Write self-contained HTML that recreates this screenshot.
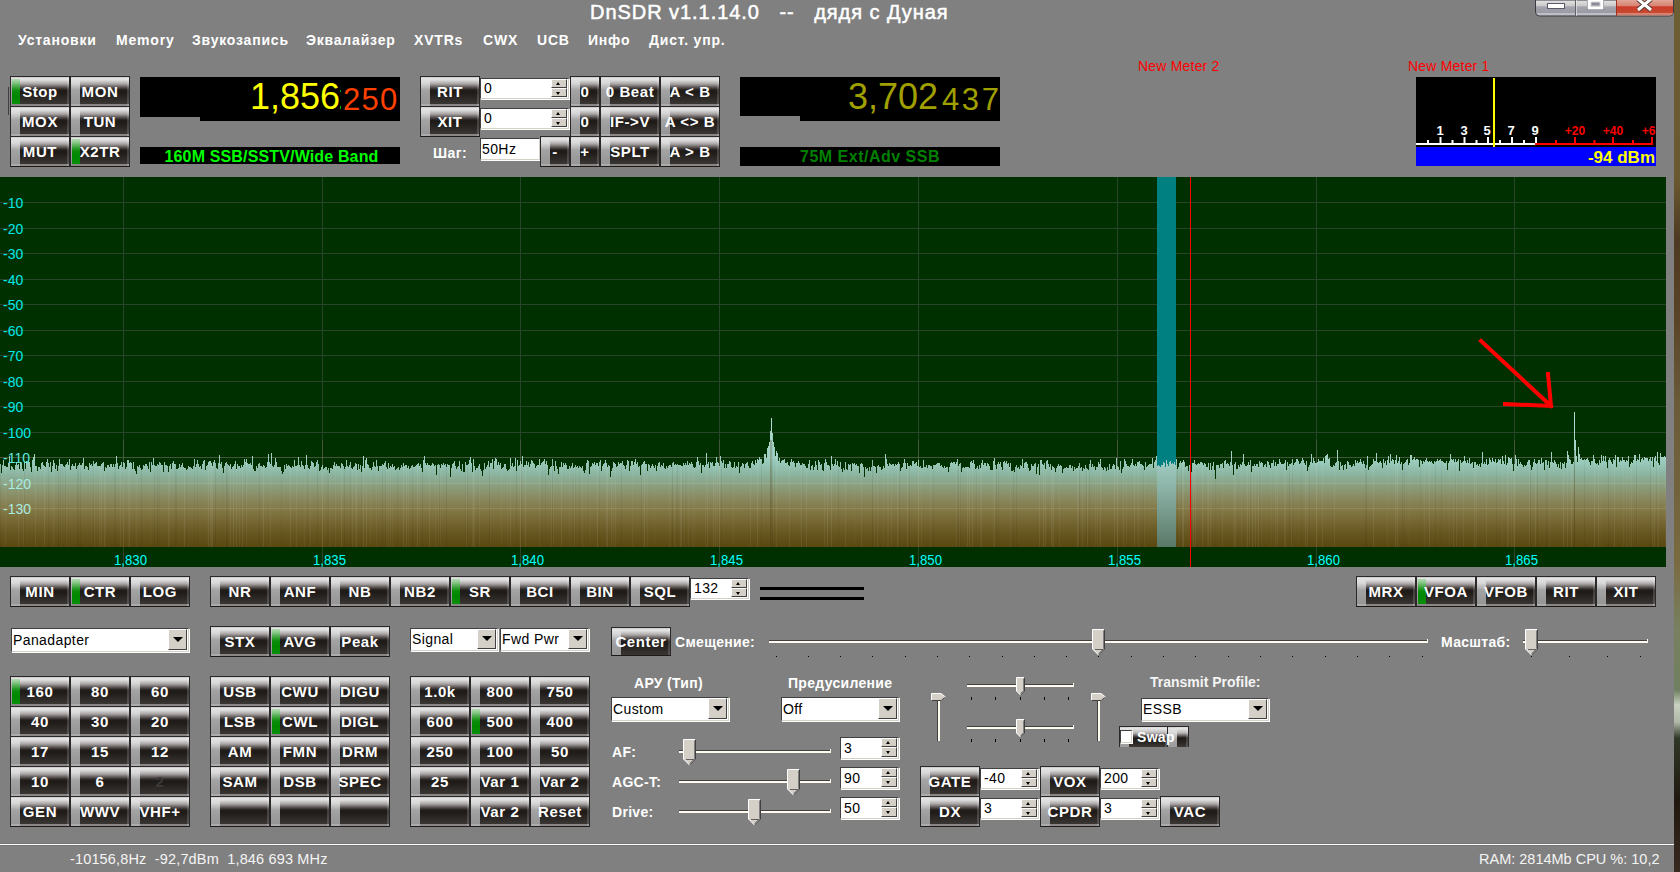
<!DOCTYPE html><html><head><meta charset="utf-8"><style>
html,body{margin:0;padding:0;width:1680px;height:872px;overflow:hidden;background:#808080;font-family:"Liberation Sans",sans-serif;}
.a{position:absolute;white-space:nowrap}
.b{position:absolute;box-sizing:border-box;width:60px;height:30px;border:1px solid #2a2828;border-top:0;border-bottom-color:#1e1a18;
background:linear-gradient(to bottom,#b4b4b4 0,#e6e6e6 1px,#dedede 3px,#c4c0c0 5px,#a8a4a4 7px,#787272 9px,#4a4442 11px,#221e1c 13px,#1e1a18 15px,#3a3634 27px,#8a8686 27px,#8a8686 29px);
box-shadow:inset -2px 0 0 rgba(255,255,255,.16),0 -1px 0 #2a2828;
color:#fff;font-weight:bold;font-size:15px;text-align:center;line-height:29px;letter-spacing:.6px}
.b::before{content:"";position:absolute;left:0;top:0;bottom:0;width:9px;
background:linear-gradient(to bottom,#c0c0c0 0,#e4e4e4 1px,#d8d8d8 6px,#bcbcbc 10px,#a4a4a4 13px,#9c9c9c 20px,#969696 27px,#acacac 27px,#acacac 29px)}
.b.on::before{left:1px;width:8px;top:2px;bottom:2px;background:linear-gradient(to bottom,#b0dcb0 0,#90cc90 3px,#60b460 6px,#30a030 9px,#0a8c0a 12px,#008800 18px,#0c900c 25px)}
.b.on::after{content:"";position:absolute;left:0;top:0;bottom:0;width:1px;background:linear-gradient(#e0e0e0,#a8a8a8 40%,#909090)}
.b.dis{color:#3c3a3a}
.b span{position:relative}
.sk{position:absolute;box-sizing:border-box;background:#fff;border:1px solid;border-color:#404040 #d4d0c8 #d4d0c8 #404040;box-shadow:1px 1px 0 #fff;font-size:14px;color:#000;padding-left:1px;letter-spacing:.4px}
.arr{position:absolute;box-sizing:border-box;background:#d4d0c8;border:1px solid;border-color:#fff #404040 #404040 #fff}
.arr::after{content:"";position:absolute;left:50%;top:50%;margin-left:-5px;margin-top:-3px;border-left:5px solid transparent;border-right:5px solid transparent;border-top:5px solid #000}
.sp{position:absolute;box-sizing:border-box;background:#d4d0c8;border:1px solid;border-color:#fff #404040 #404040 #fff}
.sp.u::after{content:"";position:absolute;left:50%;top:50%;margin-left:-3px;margin-top:-2px;border-left:2.5px solid transparent;border-right:2.5px solid transparent;border-bottom:3px solid #000}
.sp.d::after{content:"";position:absolute;left:50%;top:50%;margin-left:-3px;margin-top:-1px;border-left:2.5px solid transparent;border-right:2.5px solid transparent;border-top:3px solid #000}
.lbl{position:absolute;white-space:nowrap;color:#fff;font-weight:bold;font-size:14px}
</style></head><body>
<div class="a" style="left:1674px;top:0;width:6px;height:872px;background:linear-gradient(to bottom,#6e5e34 0,#6a5830 180px,#4e3a22 240px,#5a4428 320px,#6a5a38 400px,#7a6a40 560px,#788060 630px,#708060 690px,#c8d0c0 705px,#b0b8a8 722px,#303828 738px,#201810 800px,#3a2a20 872px)"></div>
<div class="a" style="left:590px;top:1px;font-size:20px;line-height:23px;color:#fff;font-weight:normal;letter-spacing:.95px;-webkit-text-stroke:.5px #fff">DnSDR v1.1.14.0&nbsp;&nbsp;&nbsp;--&nbsp;&nbsp;&nbsp;дядя с Дуная</div>
<svg class="a" style="left:1535px;top:0" width="139" height="18" viewBox="0 0 139 18"><defs><linearGradient id="wg" x1="0" y1="0" x2="0" y2="16" gradientUnits="userSpaceOnUse"><stop offset="0" stop-color="#e4e4e4"/><stop offset="0.38" stop-color="#c8c8c8"/><stop offset="0.42" stop-color="#a4a4ac"/><stop offset="0.8" stop-color="#9a9aa6"/><stop offset="0.85" stop-color="#c4c4ca"/><stop offset="1" stop-color="#b0b0b8"/></linearGradient><linearGradient id="wr" x1="0" y1="0" x2="0" y2="16" gradientUnits="userSpaceOnUse"><stop offset="0" stop-color="#e0a898"/><stop offset="0.38" stop-color="#d88070"/><stop offset="0.42" stop-color="#cc3a28"/><stop offset="0.78" stop-color="#c84830"/><stop offset="0.85" stop-color="#d88a78"/><stop offset="1" stop-color="#c87060"/></linearGradient></defs><path d="M0.5 0V12Q0.5 16 4.5 16H134.5Q138.5 16 138.5 12V0Z" fill="url(#wg)" stroke="#3c3c44"/><path d="M82 0H138V12Q138 15.5 134.5 15.5H82Z" fill="url(#wr)"/><rect x="41" y="0" width="1" height="16" fill="#f0f0f0" fill-opacity=".6"/><rect x="40" y="0" width="1" height="16" fill="#606068"/><rect x="81" y="0" width="1" height="16" fill="#a03020"/><rect x="12.5" y="3.5" width="17" height="5" fill="#fff" stroke="#5a5a6a"/><rect x="52.5" y="-1.5" width="16" height="11" fill="none" stroke="#5a5a6a"/><rect x="54" y="0" width="13" height="8" fill="none" stroke="#fff" stroke-width="3"/><rect x="56.5" y="2.5" width="8" height="3" fill="#8a8a98"/><path d="M103 -1L116 10M116 -1L103 10" stroke="#5a3a3a" stroke-width="5"/><path d="M103 -1L116 10M116 -1L103 10" stroke="#fff" stroke-width="3"/></svg>
<div class="a" style="left:18px;top:32px;font-size:14px;line-height:16px;color:#fff;font-weight:bold;letter-spacing:.8px">Установки</div>
<div class="a" style="left:116px;top:32px;font-size:14px;line-height:16px;color:#fff;font-weight:bold;letter-spacing:.8px">Memory</div>
<div class="a" style="left:192px;top:32px;font-size:14px;line-height:16px;color:#fff;font-weight:bold;letter-spacing:.8px">Звукозапись</div>
<div class="a" style="left:306px;top:32px;font-size:14px;line-height:16px;color:#fff;font-weight:bold;letter-spacing:.8px">Эквалайзер</div>
<div class="a" style="left:414px;top:32px;font-size:14px;line-height:16px;color:#fff;font-weight:bold;letter-spacing:.8px">XVTRs</div>
<div class="a" style="left:483px;top:32px;font-size:14px;line-height:16px;color:#fff;font-weight:bold;letter-spacing:.8px">CWX</div>
<div class="a" style="left:537px;top:32px;font-size:14px;line-height:16px;color:#fff;font-weight:bold;letter-spacing:.8px">UCB</div>
<div class="a" style="left:588px;top:32px;font-size:14px;line-height:16px;color:#fff;font-weight:bold;letter-spacing:.8px">Инфо</div>
<div class="a" style="left:649px;top:32px;font-size:14px;line-height:16px;color:#fff;font-weight:bold;letter-spacing:.8px">Дист. упр.</div>
<div class="b on" style="left:10px;top:77px"><span>Stop</span></div>
<div class="b" style="left:70px;top:77px"><span>MON</span></div>
<div class="b" style="left:10px;top:107px"><span>MOX</span></div>
<div class="b" style="left:70px;top:107px"><span>TUN</span></div>
<div class="b" style="left:10px;top:137px"><span>MUT</span></div>
<div class="b on" style="left:70px;top:137px"><span>X2TR</span></div>
<div class="a" style="left:8px;top:87px;width:1px;height:28px;background:#404040"></div>
<div class="a" style="left:140px;top:77px;width:260px;height:40px;background:#000"></div>
<div class="a" style="left:200px;top:117px;width:200px;height:4px;background:#000"></div>
<div class="a" style="left:250px;top:76px;font-size:36px;line-height:41px;color:#ffff00;font-weight:normal;">1,856</div>
<div class="a" style="left:343px;top:82px;font-size:31px;line-height:36px;color:#ff4000;font-weight:normal;letter-spacing:1.2px">250</div>
<div class="a" style="left:340px;top:90px;width:1px;height:2px;background:#00b000"></div><div class="a" style="left:340px;top:106px;width:1px;height:3px;background:#00b000"></div>
<div class="a" style="left:941px;top:98px;width:2px;height:3px;background:#808000"></div>
<div class="a" style="left:140px;top:147px;width:260px;height:17px;background:#000"></div>
<div class="a" style="left:140px;top:147px;width:260px;height:17px;line-height:19px;text-align:center;color:#00ff00;font-weight:bold;font-size:16px;letter-spacing:.15px;padding-left:3px;box-sizing:border-box">160M SSB/SSTV/Wide Band</div>
<div class="b" style="left:420px;top:77px"><span>RIT</span></div>
<div class="b" style="left:420px;top:107px"><span>XIT</span></div>
<div class="sk" style="left:480px;top:78px;width:89px;height:21px;line-height:19px;font-size:14px;padding-left:3px">0</div>
<div class="sp u" style="left:551px;top:79px;width:16px;height:9px"></div>
<div class="sp d" style="left:551px;top:88px;width:16px;height:9px"></div>
<div class="sk" style="left:480px;top:108px;width:89px;height:21px;line-height:19px;font-size:14px;padding-left:3px">0</div>
<div class="sp u" style="left:551px;top:109px;width:16px;height:9px"></div>
<div class="sp d" style="left:551px;top:118px;width:16px;height:9px"></div>
<div class="a" style="left:433px;top:145px;font-size:14px;line-height:16px;color:#fff;font-weight:bold;letter-spacing:.4px">Шаг:</div>
<div class="sk" style="left:480px;top:138px;width:60px;height:22px;line-height:20px">50Hz</div>
<div class="b" style="left:570px;top:77px;width:30px"><span>0</span></div>
<div class="b" style="left:600px;top:77px"><span>0 Beat</span></div>
<div class="b" style="left:660px;top:77px"><span>A &lt; B</span></div>
<div class="b" style="left:570px;top:107px;width:30px"><span>0</span></div>
<div class="b" style="left:600px;top:107px"><span>IF-&gt;V</span></div>
<div class="b" style="left:660px;top:107px"><span>A &lt;&gt; B</span></div>
<div class="b" style="left:540px;top:137px;width:30px"><span>-</span></div>
<div class="b" style="left:570px;top:137px;width:30px"><span>+</span></div>
<div class="b" style="left:600px;top:137px"><span>SPLT</span></div>
<div class="b" style="left:660px;top:137px"><span>A &gt; B</span></div>
<div class="a" style="left:740px;top:77px;width:260px;height:39px;background:#000"></div>
<div class="a" style="left:800px;top:116px;width:200px;height:5px;background:#000"></div>
<div class="a" style="left:848px;top:76px;font-size:36px;line-height:41px;color:#a0a000;font-weight:normal;">3,702</div>
<div class="a" style="left:942px;top:82px;font-size:31px;line-height:36px;color:#a0a000;font-weight:normal;letter-spacing:2.6px">437</div>
<div class="a" style="left:740px;top:147px;width:260px;height:19px;background:#000"></div>
<div class="a" style="left:740px;top:147px;width:260px;height:19px;line-height:19px;text-align:center;color:#008000;font-weight:bold;font-size:16px;letter-spacing:.5px">75M Ext/Adv SSB</div>
<div class="a" style="left:1138px;top:58px;font-size:14px;line-height:16px;color:#ff0000;font-weight:normal;letter-spacing:.2px">New Meter 2</div>
<div class="a" style="left:1408px;top:58px;font-size:14px;line-height:16px;color:#ff0000;font-weight:normal;letter-spacing:.2px">New Meter 1</div>
<svg class="a" style="left:1416px;top:77px" width="240" height="89" viewBox="0 0 240 89"><rect x="0" y="0" width="240" height="89" fill="#000"/><rect x="0" y="70" width="240" height="19" fill="#0000ff"/><rect x="0" y="66" width="119" height="2" fill="#fff"/><rect x="119" y="66" width="118" height="2" fill="#ff0000"/><rect x="11" y="63" width="2" height="3" fill="#fff"/><rect x="23.5" y="60" width="2" height="6" fill="#fff"/><rect x="35.5" y="63" width="2" height="3" fill="#fff"/><rect x="47.5" y="60" width="2" height="6" fill="#fff"/><rect x="59.5" y="63" width="2" height="3" fill="#fff"/><rect x="71" y="60" width="2" height="6" fill="#fff"/><rect x="83" y="63" width="2" height="3" fill="#fff"/><rect x="95" y="60" width="2" height="6" fill="#fff"/><rect x="107" y="63" width="2" height="3" fill="#fff"/><rect x="119" y="60" width="2" height="6" fill="#fff"/><rect x="139" y="63" width="2" height="3" fill="#ff0000"/><rect x="158" y="60" width="2" height="6" fill="#ff0000"/><rect x="177.5" y="63" width="2" height="3" fill="#ff0000"/><rect x="196" y="60" width="2" height="6" fill="#ff0000"/><rect x="216" y="63" width="2" height="3" fill="#ff0000"/><rect x="235" y="60" width="2" height="6" fill="#ff0000"/><text x="24" y="58" fill="#fff" font-family="Liberation Sans" font-weight="bold" font-size="13" text-anchor="middle">1</text><text x="48" y="58" fill="#fff" font-family="Liberation Sans" font-weight="bold" font-size="13" text-anchor="middle">3</text><text x="71" y="58" fill="#fff" font-family="Liberation Sans" font-weight="bold" font-size="13" text-anchor="middle">5</text><text x="95" y="58" fill="#fff" font-family="Liberation Sans" font-weight="bold" font-size="13" text-anchor="middle">7</text><text x="119" y="58" fill="#fff" font-family="Liberation Sans" font-weight="bold" font-size="13" text-anchor="middle">9</text><text x="159" y="58" fill="#ff0000" font-family="Liberation Sans" font-weight="bold" font-size="12" text-anchor="middle">+20</text><text x="197" y="58" fill="#ff0000" font-family="Liberation Sans" font-weight="bold" font-size="12" text-anchor="middle">+40</text><text x="236" y="58" fill="#ff0000" font-family="Liberation Sans" font-weight="bold" font-size="12" text-anchor="middle">+60</text><rect x="77" y="1" width="2" height="69" fill="#ffff00"/><text x="239" y="86" fill="#ffff00" font-family="Liberation Sans" font-weight="bold" font-size="17" text-anchor="end">-94 dBm</text></svg>
<svg class="a" style="left:0;top:177px" width="1666" height="390" viewBox="0 177 1666 390" shape-rendering="crispEdges"><defs><linearGradient id="g" x1="0" y1="410" x2="0" y2="547" gradientUnits="userSpaceOnUse"><stop offset="0" stop-color="#b0dcd4"/><stop offset="0.328" stop-color="#a2d2c6"/><stop offset="0.40" stop-color="#96c6b6"/><stop offset="0.47" stop-color="#8cb4a0"/><stop offset="0.55" stop-color="#8aa080"/><stop offset="0.63" stop-color="#8a8c64"/><stop offset="0.71" stop-color="#847c4c"/><stop offset="0.80" stop-color="#786a36"/><stop offset="0.90" stop-color="#665620"/><stop offset="1" stop-color="#5a4810"/></linearGradient><linearGradient id="pb" x1="0" y1="440" x2="0" y2="547" gradientUnits="userSpaceOnUse"><stop offset="0" stop-color="#b0e0d8"/><stop offset="0.4" stop-color="#90b8ac"/><stop offset="1" stop-color="#5a7868"/></linearGradient></defs><rect x="0" y="177" width="1666" height="390" fill="#003000"/><rect x="0" y="202" width="1666" height="1" fill="#294428"/><rect x="0" y="228" width="1666" height="1" fill="#294428"/><rect x="0" y="253" width="1666" height="1" fill="#294428"/><rect x="0" y="279" width="1666" height="1" fill="#294428"/><rect x="0" y="304" width="1666" height="1" fill="#294428"/><rect x="0" y="330" width="1666" height="1" fill="#294428"/><rect x="0" y="355" width="1666" height="1" fill="#294428"/><rect x="0" y="381" width="1666" height="1" fill="#294428"/><rect x="0" y="406" width="1666" height="1" fill="#294428"/><rect x="0" y="432" width="1666" height="1" fill="#294428"/><rect x="0" y="457" width="1666" height="1" fill="#294428"/><rect x="0" y="483" width="1666" height="1" fill="#294428"/><rect x="0" y="508" width="1666" height="1" fill="#294428"/><rect x="123" y="177" width="1" height="390" fill="#294428"/><rect x="322" y="177" width="1" height="390" fill="#294428"/><rect x="520" y="177" width="1" height="390" fill="#294428"/><rect x="719" y="177" width="1" height="390" fill="#294428"/><rect x="918" y="177" width="1" height="390" fill="#294428"/><rect x="1117" y="177" width="1" height="390" fill="#294428"/><rect x="1316" y="177" width="1" height="390" fill="#294428"/><rect x="1514" y="177" width="1" height="390" fill="#294428"/><path d="M0 547L0 464L1 464L1 473L2 473L2 465L3 465L3 460L4 460L4 466L5 466L5 466L6 466L6 467L7 467L7 467L8 467L8 463L9 463L9 456L10 456L10 470L11 470L11 466L12 466L12 467L13 467L13 469L14 469L14 470L15 470L15 465L16 465L16 463L17 463L17 465L18 465L18 464L19 464L19 469L20 469L20 463L21 463L21 463L22 463L22 469L23 469L23 471L24 471L24 462L25 462L25 469L26 469L26 461L27 461L27 462L28 462L28 461L29 461L29 462L30 462L30 467L31 467L31 472L32 472L32 460L33 460L33 457L34 457L34 454L35 454L35 466L36 466L36 466L37 466L37 471L38 471L38 467L39 467L39 467L40 467L40 469L41 469L41 463L42 463L42 462L43 462L43 465L44 465L44 466L45 466L45 467L46 467L46 462L47 462L47 459L48 459L48 463L49 463L49 467L50 467L50 462L51 462L51 472L52 472L52 466L53 466L53 460L54 460L54 463L55 463L55 469L56 469L56 465L57 465L57 471L58 471L58 466L59 466L59 459L60 459L60 464L61 464L61 464L62 464L62 464L63 464L63 466L64 466L64 467L65 467L65 465L66 465L66 464L67 464L67 462L68 462L68 465L69 465L69 459L70 459L70 470L71 470L71 466L72 466L72 464L73 464L73 466L74 466L74 466L75 466L75 463L76 463L76 469L77 469L77 466L78 466L78 465L79 465L79 463L80 463L80 465L81 465L81 465L82 465L82 463L83 463L83 458L84 458L84 469L85 469L85 466L86 466L86 466L87 466L87 467L88 467L88 470L89 470L89 463L90 463L90 465L91 465L91 464L92 464L92 466L93 466L93 461L94 461L94 464L95 464L95 463L96 463L96 462L97 462L97 466L98 466L98 466L99 466L99 466L100 466L100 466L101 466L101 464L102 464L102 463L103 463L103 462L104 462L104 471L105 471L105 467L106 467L106 468L107 468L107 465L108 465L108 465L109 465L109 467L110 467L110 464L111 464L111 464L112 464L112 467L113 467L113 464L114 464L114 467L115 467L115 464L116 464L116 456L117 456L117 463L118 463L118 469L119 469L119 466L120 466L120 465L121 465L121 462L122 462L122 467L123 467L123 462L124 462L124 463L125 463L125 469L126 469L126 467L127 467L127 460L128 460L128 460L129 460L129 463L130 463L130 462L131 462L131 463L132 463L132 469L133 469L133 462L134 462L134 469L135 469L135 471L136 471L136 474L137 474L137 466L138 466L138 467L139 467L139 465L140 465L140 468L141 468L141 470L142 470L142 469L143 469L143 465L144 465L144 466L145 466L145 464L146 464L146 464L147 464L147 466L148 466L148 469L149 469L149 462L150 462L150 472L151 472L151 462L152 462L152 465L153 465L153 458L154 458L154 465L155 465L155 466L156 466L156 466L157 466L157 464L158 464L158 465L159 465L159 462L160 462L160 463L161 463L161 465L162 465L162 465L163 465L163 472L164 472L164 462L165 462L165 465L166 465L166 465L167 465L167 466L168 466L168 472L169 472L169 466L170 466L170 464L171 464L171 469L172 469L172 463L173 463L173 461L174 461L174 464L175 464L175 464L176 464L176 469L177 469L177 469L178 469L178 468L179 468L179 464L180 464L180 467L181 467L181 465L182 465L182 463L183 463L183 467L184 467L184 468L185 468L185 468L186 468L186 470L187 470L187 469L188 469L188 466L189 466L189 467L190 467L190 467L191 467L191 468L192 468L192 469L193 469L193 466L194 466L194 459L195 459L195 467L196 467L196 464L197 464L197 460L198 460L198 464L199 464L199 467L200 467L200 466L201 466L201 469L202 469L202 464L203 464L203 461L204 461L204 460L205 460L205 470L206 470L206 466L207 466L207 465L208 465L208 462L209 462L209 461L210 461L210 461L211 461L211 463L212 463L212 466L213 466L213 462L214 462L214 460L215 460L215 463L216 463L216 468L217 468L217 469L218 469L218 463L219 463L219 455L220 455L220 464L221 464L221 462L222 462L222 468L223 468L223 473L224 473L224 466L225 466L225 463L226 463L226 462L227 462L227 464L228 464L228 465L229 465L229 466L230 466L230 464L231 464L231 469L232 469L232 467L233 467L233 466L234 466L234 464L235 464L235 461L236 461L236 469L237 469L237 464L238 464L238 466L239 466L239 466L240 466L240 468L241 468L241 465L242 465L242 467L243 467L243 465L244 465L244 459L245 459L245 462L246 462L246 459L247 459L247 463L248 463L248 464L249 464L249 464L250 464L250 463L251 463L251 465L252 465L252 456L253 456L253 469L254 469L254 471L255 471L255 471L256 471L256 466L257 466L257 468L258 468L258 464L259 464L259 463L260 463L260 466L261 466L261 466L262 466L262 467L263 467L263 465L264 465L264 466L265 466L265 468L266 468L266 467L267 467L267 462L268 462L268 454L269 454L269 462L270 462L270 464L271 464L271 453L272 453L272 466L273 466L273 467L274 467L274 465L275 465L275 458L276 458L276 462L277 462L277 467L278 467L278 467L279 467L279 467L280 467L280 467L281 467L281 471L282 471L282 474L283 474L283 472L284 472L284 465L285 465L285 469L286 469L286 464L287 464L287 466L288 466L288 465L289 465L289 466L290 466L290 467L291 467L291 468L292 468L292 466L293 466L293 467L294 467L294 460L295 460L295 466L296 466L296 466L297 466L297 465L298 465L298 457L299 457L299 465L300 465L300 467L301 467L301 461L302 461L302 465L303 465L303 466L304 466L304 469L305 469L305 465L306 465L306 455L307 455L307 465L308 465L308 468L309 468L309 469L310 469L310 466L311 466L311 461L312 461L312 462L313 462L313 463L314 463L314 467L315 467L315 466L316 466L316 462L317 462L317 460L318 460L318 464L319 464L319 471L320 471L320 470L321 470L321 467L322 467L322 465L323 465L323 469L324 469L324 468L325 468L325 467L326 467L326 467L327 467L327 470L328 470L328 468L329 468L329 473L330 473L330 468L331 468L331 468L332 468L332 469L333 469L333 465L334 465L334 462L335 462L335 466L336 466L336 464L337 464L337 466L338 466L338 466L339 466L339 466L340 466L340 468L341 468L341 463L342 463L342 464L343 464L343 466L344 466L344 469L345 469L345 467L346 467L346 460L347 460L347 466L348 466L348 467L349 467L349 465L350 465L350 462L351 462L351 468L352 468L352 469L353 469L353 467L354 467L354 466L355 466L355 463L356 463L356 464L357 464L357 470L358 470L358 464L359 464L359 469L360 469L360 465L361 465L361 472L362 472L362 466L363 466L363 456L364 456L364 468L365 468L365 460L366 460L366 458L367 458L367 464L368 464L368 465L369 465L369 468L370 468L370 468L371 468L371 470L372 470L372 467L373 467L373 462L374 462L374 466L375 466L375 467L376 467L376 460L377 460L377 466L378 466L378 471L379 471L379 466L380 466L380 466L381 466L381 466L382 466L382 464L383 464L383 465L384 465L384 463L385 463L385 461L386 461L386 467L387 467L387 469L388 469L388 463L389 463L389 468L390 468L390 466L391 466L391 467L392 467L392 464L393 464L393 467L394 467L394 466L395 466L395 470L396 470L396 469L397 469L397 468L398 468L398 467L399 467L399 470L400 470L400 468L401 468L401 465L402 465L402 467L403 467L403 463L404 463L404 466L405 466L405 465L406 465L406 465L407 465L407 468L408 468L408 466L409 466L409 469L410 469L410 468L411 468L411 466L412 466L412 465L413 465L413 467L414 467L414 467L415 467L415 466L416 466L416 465L417 465L417 464L418 464L418 463L419 463L419 466L420 466L420 464L421 464L421 468L422 468L422 472L423 472L423 460L424 460L424 456L425 456L425 463L426 463L426 465L427 465L427 463L428 463L428 465L429 465L429 465L430 465L430 466L431 466L431 465L432 465L432 463L433 463L433 464L434 464L434 466L435 466L435 465L436 465L436 475L437 475L437 465L438 465L438 464L439 464L439 465L440 465L440 468L441 468L441 464L442 464L442 465L443 465L443 463L444 463L444 465L445 465L445 464L446 464L446 467L447 467L447 464L448 464L448 465L449 465L449 465L450 465L450 477L451 477L451 468L452 468L452 464L453 464L453 463L454 463L454 461L455 461L455 466L456 466L456 469L457 469L457 467L458 467L458 466L459 466L459 461L460 461L460 469L461 469L461 471L462 471L462 464L463 464L463 472L464 472L464 472L465 472L465 462L466 462L466 465L467 465L467 465L468 465L468 464L469 464L469 460L470 460L470 457L471 457L471 463L472 463L472 472L473 472L473 459L474 459L474 466L475 466L475 470L476 470L476 468L477 468L477 468L478 468L478 466L479 466L479 464L480 464L480 469L481 469L481 471L482 471L482 476L483 476L483 470L484 470L484 463L485 463L485 469L486 469L486 467L487 467L487 465L488 465L488 461L489 461L489 467L490 467L490 463L491 463L491 463L492 463L492 459L493 459L493 469L494 469L494 461L495 461L495 458L496 458L496 459L497 459L497 465L498 465L498 462L499 462L499 465L500 465L500 463L501 463L501 469L502 469L502 468L503 468L503 467L504 467L504 464L505 464L505 464L506 464L506 469L507 469L507 471L508 471L508 470L509 470L509 469L510 469L510 458L511 458L511 466L512 466L512 463L513 463L513 467L514 467L514 466L515 466L515 458L516 458L516 471L517 471L517 460L518 460L518 466L519 466L519 465L520 465L520 461L521 461L521 464L522 464L522 456L523 456L523 467L524 467L524 465L525 465L525 465L526 465L526 461L527 461L527 465L528 465L528 462L529 462L529 467L530 467L530 464L531 464L531 460L532 460L532 461L533 461L533 463L534 463L534 464L535 464L535 468L536 468L536 466L537 466L537 465L538 465L538 465L539 465L539 459L540 459L540 465L541 465L541 463L542 463L542 462L543 462L543 461L544 461L544 459L545 459L545 464L546 464L546 461L547 461L547 465L548 465L548 475L549 475L549 469L550 469L550 467L551 467L551 466L552 466L552 459L553 459L553 466L554 466L554 471L555 471L555 461L556 461L556 466L557 466L557 469L558 469L558 474L559 474L559 467L560 467L560 467L561 467L561 462L562 462L562 467L563 467L563 463L564 463L564 465L565 465L565 463L566 463L566 465L567 465L567 469L568 469L568 469L569 469L569 466L570 466L570 468L571 468L571 466L572 466L572 463L573 463L573 468L574 468L574 467L575 467L575 465L576 465L576 467L577 467L577 466L578 466L578 468L579 468L579 466L580 466L580 467L581 467L581 468L582 468L582 466L583 466L583 471L584 471L584 473L585 473L585 470L586 470L586 463L587 463L587 460L588 460L588 461L589 461L589 474L590 474L590 467L591 467L591 466L592 466L592 463L593 463L593 464L594 464L594 462L595 462L595 465L596 465L596 463L597 463L597 463L598 463L598 466L599 466L599 462L600 462L600 460L601 460L601 471L602 471L602 466L603 466L603 464L604 464L604 463L605 463L605 460L606 460L606 463L607 463L607 467L608 467L608 465L609 465L609 466L610 466L610 477L611 477L611 471L612 471L612 468L613 468L613 462L614 462L614 463L615 463L615 464L616 464L616 467L617 467L617 466L618 466L618 462L619 462L619 464L620 464L620 463L621 463L621 463L622 463L622 461L623 461L623 465L624 465L624 466L625 466L625 469L626 469L626 465L627 465L627 460L628 460L628 461L629 461L629 471L630 471L630 466L631 466L631 461L632 461L632 461L633 461L633 465L634 465L634 462L635 462L635 459L636 459L636 464L637 464L637 462L638 462L638 467L639 467L639 466L640 466L640 475L641 475L641 465L642 465L642 464L643 464L643 462L644 462L644 461L645 461L645 464L646 464L646 464L647 464L647 471L648 471L648 464L649 464L649 465L650 465L650 468L651 468L651 466L652 466L652 464L653 464L653 466L654 466L654 468L655 468L655 465L656 465L656 471L657 471L657 466L658 466L658 463L659 463L659 462L660 462L660 467L661 467L661 465L662 465L662 466L663 466L663 463L664 463L664 468L665 468L665 469L666 469L666 466L667 466L667 468L668 468L668 466L669 466L669 465L670 465L670 465L671 465L671 467L672 467L672 463L673 463L673 462L674 462L674 465L675 465L675 464L676 464L676 465L677 465L677 464L678 464L678 465L679 465L679 465L680 465L680 465L681 465L681 466L682 466L682 466L683 466L683 463L684 463L684 465L685 465L685 463L686 463L686 465L687 465L687 461L688 461L688 465L689 465L689 463L690 463L690 464L691 464L691 462L692 462L692 464L693 464L693 467L694 467L694 468L695 468L695 467L696 467L696 462L697 462L697 457L698 457L698 461L699 461L699 465L700 465L700 463L701 463L701 473L702 473L702 465L703 465L703 465L704 465L704 467L705 467L705 465L706 465L706 453L707 453L707 464L708 464L708 462L709 462L709 468L710 468L710 462L711 462L711 463L712 463L712 462L713 462L713 466L714 466L714 466L715 466L715 463L716 463L716 457L717 457L717 462L718 462L718 463L719 463L719 466L720 466L720 456L721 456L721 461L722 461L722 463L723 463L723 460L724 460L724 468L725 468L725 464L726 464L726 468L727 468L727 464L728 464L728 464L729 464L729 461L730 461L730 462L731 462L731 467L732 467L732 468L733 468L733 467L734 467L734 462L735 462L735 468L736 468L736 466L737 466L737 467L738 467L738 462L739 462L739 473L740 473L740 467L741 467L741 466L742 466L742 463L743 463L743 464L744 464L744 468L745 468L745 464L746 464L746 463L747 463L747 462L748 462L748 466L749 466L749 468L750 468L750 468L751 468L751 463L752 463L752 461L753 461L753 464L754 464L754 465L755 465L755 460L756 460L756 463L757 463L757 459L758 459L758 460L759 460L759 457L760 457L760 459L761 459L761 459L762 459L762 464L763 464L763 463L764 463L764 454L765 454L765 454L766 454L766 458L767 458L767 448L768 448L768 446L769 446L769 442L770 442L770 431L771 431L771 418L772 418L772 433L773 433L773 442L774 442L774 447L775 447L775 456L776 456L776 451L777 451L777 453L778 453L778 461L779 461L779 458L780 458L780 463L781 463L781 461L782 461L782 460L783 460L783 460L784 460L784 459L785 459L785 463L786 463L786 463L787 463L787 462L788 462L788 465L789 465L789 466L790 466L790 462L791 462L791 459L792 459L792 462L793 462L793 461L794 461L794 463L795 463L795 467L796 467L796 463L797 463L797 463L798 463L798 461L799 461L799 463L800 463L800 465L801 465L801 465L802 465L802 463L803 463L803 464L804 464L804 464L805 464L805 466L806 466L806 468L807 468L807 468L808 468L808 464L809 464L809 460L810 460L810 470L811 470L811 466L812 466L812 465L813 465L813 470L814 470L814 467L815 467L815 461L816 461L816 465L817 465L817 470L818 470L818 460L819 460L819 462L820 462L820 465L821 465L821 464L822 464L822 470L823 470L823 471L824 471L824 463L825 463L825 459L826 459L826 462L827 462L827 465L828 465L828 465L829 465L829 466L830 466L830 470L831 470L831 456L832 456L832 464L833 464L833 466L834 466L834 464L835 464L835 459L836 459L836 465L837 465L837 461L838 461L838 466L839 466L839 467L840 467L840 462L841 462L841 469L842 469L842 472L843 472L843 468L844 468L844 470L845 470L845 462L846 462L846 469L847 469L847 470L848 470L848 464L849 464L849 465L850 465L850 464L851 464L851 471L852 471L852 463L853 463L853 464L854 464L854 463L855 463L855 465L856 465L856 464L857 464L857 466L858 466L858 466L859 466L859 473L860 473L860 464L861 464L861 463L862 463L862 464L863 464L863 467L864 467L864 477L865 477L865 467L866 467L866 469L867 469L867 468L868 468L868 471L869 471L869 467L870 467L870 471L871 471L871 467L872 467L872 460L873 460L873 466L874 466L874 466L875 466L875 467L876 467L876 473L877 473L877 466L878 466L878 465L879 465L879 467L880 467L880 467L881 467L881 470L882 470L882 469L883 469L883 466L884 466L884 468L885 468L885 454L886 454L886 459L887 459L887 464L888 464L888 466L889 466L889 463L890 463L890 464L891 464L891 465L892 465L892 464L893 464L893 464L894 464L894 466L895 466L895 464L896 464L896 465L897 465L897 464L898 464L898 462L899 462L899 464L900 464L900 471L901 471L901 468L902 468L902 467L903 467L903 463L904 463L904 459L905 459L905 463L906 463L906 469L907 469L907 463L908 463L908 466L909 466L909 466L910 466L910 465L911 465L911 466L912 466L912 461L913 461L913 461L914 461L914 464L915 464L915 463L916 463L916 462L917 462L917 466L918 466L918 460L919 460L919 467L920 467L920 466L921 466L921 468L922 468L922 468L923 468L923 460L924 460L924 467L925 467L925 467L926 467L926 465L927 465L927 468L928 468L928 465L929 465L929 465L930 465L930 466L931 466L931 466L932 466L932 469L933 469L933 465L934 465L934 465L935 465L935 465L936 465L936 464L937 464L937 463L938 463L938 463L939 463L939 463L940 463L940 466L941 466L941 465L942 465L942 467L943 467L943 468L944 468L944 466L945 466L945 468L946 468L946 467L947 467L947 467L948 467L948 472L949 472L949 467L950 467L950 463L951 463L951 462L952 462L952 463L953 463L953 462L954 462L954 462L955 462L955 464L956 464L956 462L957 462L957 459L958 459L958 466L959 466L959 464L960 464L960 463L961 463L961 472L962 472L962 468L963 468L963 467L964 467L964 468L965 468L965 467L966 467L966 467L967 467L967 467L968 467L968 467L969 467L969 468L970 468L970 462L971 462L971 461L972 461L972 463L973 463L973 460L974 460L974 464L975 464L975 469L976 469L976 468L977 468L977 466L978 466L978 469L979 469L979 465L980 465L980 468L981 468L981 463L982 463L982 460L983 460L983 465L984 465L984 463L985 463L985 463L986 463L986 466L987 466L987 463L988 463L988 464L989 464L989 466L990 466L990 470L991 470L991 470L992 470L992 470L993 470L993 461L994 461L994 458L995 458L995 465L996 465L996 469L997 469L997 464L998 464L998 462L999 462L999 464L1000 464L1000 462L1001 462L1001 467L1002 467L1002 470L1003 470L1003 462L1004 462L1004 461L1005 461L1005 463L1006 463L1006 461L1007 461L1007 464L1008 464L1008 463L1009 463L1009 467L1010 467L1010 463L1011 463L1011 471L1012 471L1012 471L1013 471L1013 470L1014 470L1014 472L1015 472L1015 467L1016 467L1016 465L1017 465L1017 468L1018 468L1018 467L1019 467L1019 469L1020 469L1020 465L1021 465L1021 466L1022 466L1022 459L1023 459L1023 468L1024 468L1024 463L1025 463L1025 462L1026 462L1026 462L1027 462L1027 464L1028 464L1028 468L1029 468L1029 471L1030 471L1030 470L1031 470L1031 464L1032 464L1032 466L1033 466L1033 466L1034 466L1034 464L1035 464L1035 463L1036 463L1036 474L1037 474L1037 467L1038 467L1038 464L1039 464L1039 475L1040 475L1040 460L1041 460L1041 460L1042 460L1042 464L1043 464L1043 465L1044 465L1044 463L1045 463L1045 469L1046 469L1046 461L1047 461L1047 460L1048 460L1048 464L1049 464L1049 467L1050 467L1050 464L1051 464L1051 470L1052 470L1052 466L1053 466L1053 467L1054 467L1054 468L1055 468L1055 472L1056 472L1056 468L1057 468L1057 466L1058 466L1058 464L1059 464L1059 466L1060 466L1060 465L1061 465L1061 466L1062 466L1062 473L1063 473L1063 469L1064 469L1064 468L1065 468L1065 468L1066 468L1066 467L1067 467L1067 468L1068 468L1068 468L1069 468L1069 465L1070 465L1070 465L1071 465L1071 468L1072 468L1072 466L1073 466L1073 471L1074 471L1074 467L1075 467L1075 469L1076 469L1076 468L1077 468L1077 468L1078 468L1078 466L1079 466L1079 463L1080 463L1080 468L1081 468L1081 467L1082 467L1082 471L1083 471L1083 468L1084 468L1084 469L1085 469L1085 465L1086 465L1086 468L1087 468L1087 469L1088 469L1088 470L1089 470L1089 464L1090 464L1090 460L1091 460L1091 467L1092 467L1092 464L1093 464L1093 467L1094 467L1094 466L1095 466L1095 470L1096 470L1096 467L1097 467L1097 467L1098 467L1098 462L1099 462L1099 464L1100 464L1100 459L1101 459L1101 467L1102 467L1102 468L1103 468L1103 470L1104 470L1104 467L1105 467L1105 468L1106 468L1106 471L1107 471L1107 467L1108 467L1108 470L1109 470L1109 464L1110 464L1110 469L1111 469L1111 469L1112 469L1112 466L1113 466L1113 464L1114 464L1114 465L1115 465L1115 469L1116 469L1116 458L1117 458L1117 466L1118 466L1118 467L1119 467L1119 470L1120 470L1120 461L1121 461L1121 473L1122 473L1122 469L1123 469L1123 467L1124 467L1124 459L1125 459L1125 461L1126 461L1126 464L1127 464L1127 466L1128 466L1128 466L1129 466L1129 467L1130 467L1130 465L1131 465L1131 463L1132 463L1132 459L1133 459L1133 465L1134 465L1134 466L1135 466L1135 464L1136 464L1136 466L1137 466L1137 462L1138 462L1138 462L1139 462L1139 461L1140 461L1140 464L1141 464L1141 464L1142 464L1142 465L1143 465L1143 466L1144 466L1144 470L1145 470L1145 462L1146 462L1146 467L1147 467L1147 466L1148 466L1148 465L1149 465L1149 464L1150 464L1150 464L1151 464L1151 464L1152 464L1152 458L1153 458L1153 468L1154 468L1154 462L1155 462L1155 460L1156 460L1156 456L1157 456L1157 466L1158 466L1158 465L1159 465L1159 466L1160 466L1160 467L1161 467L1161 465L1162 465L1162 465L1163 465L1163 462L1164 462L1164 463L1165 463L1165 467L1166 467L1166 460L1167 460L1167 464L1168 464L1168 466L1169 466L1169 462L1170 462L1170 461L1171 461L1171 464L1172 464L1172 463L1173 463L1173 464L1174 464L1174 462L1175 462L1175 465L1176 465L1176 459L1177 459L1177 469L1178 469L1178 467L1179 467L1179 463L1180 463L1180 461L1181 461L1181 463L1182 463L1182 462L1183 462L1183 460L1184 460L1184 462L1185 462L1185 467L1186 467L1186 466L1187 466L1187 466L1188 466L1188 471L1189 471L1189 465L1190 465L1190 468L1191 468L1191 472L1192 472L1192 463L1193 463L1193 463L1194 463L1194 460L1195 460L1195 464L1196 464L1196 465L1197 465L1197 464L1198 464L1198 463L1199 463L1199 464L1200 464L1200 462L1201 462L1201 462L1202 462L1202 463L1203 463L1203 465L1204 465L1204 463L1205 463L1205 464L1206 464L1206 467L1207 467L1207 467L1208 467L1208 463L1209 463L1209 470L1210 470L1210 463L1211 463L1211 470L1212 470L1212 466L1213 466L1213 462L1214 462L1214 470L1215 470L1215 479L1216 479L1216 465L1217 465L1217 465L1218 465L1218 465L1219 465L1219 468L1220 468L1220 464L1221 464L1221 464L1222 464L1222 463L1223 463L1223 468L1224 468L1224 461L1225 461L1225 460L1226 460L1226 464L1227 464L1227 463L1228 463L1228 464L1229 464L1229 466L1230 466L1230 462L1231 462L1231 451L1232 451L1232 465L1233 465L1233 475L1234 475L1234 464L1235 464L1235 462L1236 462L1236 469L1237 469L1237 469L1238 469L1238 465L1239 465L1239 467L1240 467L1240 464L1241 464L1241 465L1242 465L1242 462L1243 462L1243 454L1244 454L1244 464L1245 464L1245 466L1246 466L1246 466L1247 466L1247 465L1248 465L1248 462L1249 462L1249 465L1250 465L1250 460L1251 460L1251 472L1252 472L1252 466L1253 466L1253 466L1254 466L1254 464L1255 464L1255 466L1256 466L1256 464L1257 464L1257 464L1258 464L1258 467L1259 467L1259 461L1260 461L1260 463L1261 463L1261 462L1262 462L1262 463L1263 463L1263 467L1264 467L1264 465L1265 465L1265 464L1266 464L1266 467L1267 467L1267 461L1268 461L1268 462L1269 462L1269 465L1270 465L1270 468L1271 468L1271 463L1272 463L1272 463L1273 463L1273 460L1274 460L1274 466L1275 466L1275 462L1276 462L1276 466L1277 466L1277 464L1278 464L1278 464L1279 464L1279 459L1280 459L1280 462L1281 462L1281 464L1282 464L1282 464L1283 464L1283 464L1284 464L1284 463L1285 463L1285 460L1286 460L1286 470L1287 470L1287 462L1288 462L1288 466L1289 466L1289 464L1290 464L1290 464L1291 464L1291 463L1292 463L1292 459L1293 459L1293 465L1294 465L1294 463L1295 463L1295 462L1296 462L1296 459L1297 459L1297 459L1298 459L1298 461L1299 461L1299 464L1300 464L1300 463L1301 463L1301 461L1302 461L1302 458L1303 458L1303 460L1304 460L1304 463L1305 463L1305 465L1306 465L1306 461L1307 461L1307 471L1308 471L1308 467L1309 467L1309 465L1310 465L1310 462L1311 462L1311 454L1312 454L1312 463L1313 463L1313 458L1314 458L1314 461L1315 461L1315 463L1316 463L1316 463L1317 463L1317 462L1318 462L1318 459L1319 459L1319 461L1320 461L1320 461L1321 461L1321 461L1322 461L1322 461L1323 461L1323 458L1324 458L1324 463L1325 463L1325 456L1326 456L1326 455L1327 455L1327 454L1328 454L1328 459L1329 459L1329 458L1330 458L1330 466L1331 466L1331 467L1332 467L1332 467L1333 467L1333 465L1334 465L1334 466L1335 466L1335 463L1336 463L1336 462L1337 462L1337 450L1338 450L1338 461L1339 461L1339 470L1340 470L1340 462L1341 462L1341 466L1342 466L1342 465L1343 465L1343 470L1344 470L1344 465L1345 465L1345 464L1346 464L1346 469L1347 469L1347 461L1348 461L1348 462L1349 462L1349 465L1350 465L1350 465L1351 465L1351 467L1352 467L1352 466L1353 466L1353 464L1354 464L1354 466L1355 466L1355 460L1356 460L1356 463L1357 463L1357 461L1358 461L1358 463L1359 463L1359 462L1360 462L1360 459L1361 459L1361 462L1362 462L1362 464L1363 464L1363 461L1364 461L1364 464L1365 464L1365 468L1366 468L1366 465L1367 465L1367 456L1368 456L1368 470L1369 470L1369 467L1370 467L1370 466L1371 466L1371 465L1372 465L1372 464L1373 464L1373 459L1374 459L1374 461L1375 461L1375 461L1376 461L1376 453L1377 453L1377 462L1378 462L1378 463L1379 463L1379 462L1380 462L1380 461L1381 461L1381 463L1382 463L1382 468L1383 468L1383 459L1384 459L1384 463L1385 463L1385 461L1386 461L1386 465L1387 465L1387 460L1388 460L1388 456L1389 456L1389 463L1390 463L1390 454L1391 454L1391 461L1392 461L1392 459L1393 459L1393 460L1394 460L1394 464L1395 464L1395 460L1396 460L1396 455L1397 455L1397 463L1398 463L1398 461L1399 461L1399 457L1400 457L1400 464L1401 464L1401 462L1402 462L1402 470L1403 470L1403 464L1404 464L1404 463L1405 463L1405 462L1406 462L1406 460L1407 460L1407 459L1408 459L1408 465L1409 465L1409 463L1410 463L1410 455L1411 455L1411 455L1412 455L1412 460L1413 460L1413 459L1414 459L1414 457L1415 457L1415 460L1416 460L1416 459L1417 459L1417 459L1418 459L1418 460L1419 460L1419 467L1420 467L1420 460L1421 460L1421 461L1422 461L1422 464L1423 464L1423 461L1424 461L1424 462L1425 462L1425 460L1426 460L1426 458L1427 458L1427 461L1428 461L1428 462L1429 462L1429 461L1430 461L1430 462L1431 462L1431 461L1432 461L1432 463L1433 463L1433 464L1434 464L1434 461L1435 461L1435 462L1436 462L1436 461L1437 461L1437 459L1438 459L1438 461L1439 461L1439 460L1440 460L1440 459L1441 459L1441 461L1442 461L1442 461L1443 461L1443 462L1444 462L1444 463L1445 463L1445 463L1446 463L1446 461L1447 461L1447 470L1448 470L1448 463L1449 463L1449 461L1450 461L1450 454L1451 454L1451 459L1452 459L1452 460L1453 460L1453 459L1454 459L1454 462L1455 462L1455 459L1456 459L1456 462L1457 462L1457 461L1458 461L1458 459L1459 459L1459 471L1460 471L1460 460L1461 460L1461 463L1462 463L1462 462L1463 462L1463 461L1464 461L1464 456L1465 456L1465 461L1466 461L1466 463L1467 463L1467 460L1468 460L1468 463L1469 463L1469 458L1470 458L1470 464L1471 464L1471 463L1472 463L1472 462L1473 462L1473 468L1474 468L1474 462L1475 462L1475 462L1476 462L1476 465L1477 465L1477 464L1478 464L1478 466L1479 466L1479 464L1480 464L1480 467L1481 467L1481 463L1482 463L1482 452L1483 452L1483 464L1484 464L1484 462L1485 462L1485 464L1486 464L1486 459L1487 459L1487 465L1488 465L1488 464L1489 464L1489 458L1490 458L1490 460L1491 460L1491 462L1492 462L1492 458L1493 458L1493 461L1494 461L1494 462L1495 462L1495 459L1496 459L1496 463L1497 463L1497 462L1498 462L1498 459L1499 459L1499 460L1500 460L1500 459L1501 459L1501 464L1502 464L1502 456L1503 456L1503 461L1504 461L1504 464L1505 464L1505 455L1506 455L1506 465L1507 465L1507 463L1508 463L1508 457L1509 457L1509 458L1510 458L1510 459L1511 459L1511 458L1512 458L1512 464L1513 464L1513 471L1514 471L1514 464L1515 464L1515 455L1516 455L1516 459L1517 459L1517 466L1518 466L1518 459L1519 459L1519 464L1520 464L1520 462L1521 462L1521 464L1522 464L1522 465L1523 465L1523 467L1524 467L1524 465L1525 465L1525 466L1526 466L1526 465L1527 465L1527 462L1528 462L1528 460L1529 460L1529 460L1530 460L1530 465L1531 465L1531 470L1532 470L1532 467L1533 467L1533 462L1534 462L1534 459L1535 459L1535 463L1536 463L1536 464L1537 464L1537 463L1538 463L1538 460L1539 460L1539 460L1540 460L1540 464L1541 464L1541 458L1542 458L1542 463L1543 463L1543 462L1544 462L1544 470L1545 470L1545 460L1546 460L1546 460L1547 460L1547 465L1548 465L1548 461L1549 461L1549 468L1550 468L1550 462L1551 462L1551 452L1552 452L1552 462L1553 462L1553 463L1554 463L1554 460L1555 460L1555 462L1556 462L1556 464L1557 464L1557 467L1558 467L1558 464L1559 464L1559 468L1560 468L1560 462L1561 462L1561 469L1562 469L1562 463L1563 463L1563 464L1564 464L1564 462L1565 462L1565 468L1566 468L1566 463L1567 463L1567 451L1568 451L1568 455L1569 455L1569 459L1570 459L1570 460L1571 460L1571 464L1572 464L1572 464L1573 464L1573 462L1574 462L1574 412L1575 412L1575 440L1576 440L1576 456L1577 456L1577 462L1578 462L1578 447L1579 447L1579 454L1580 454L1580 459L1581 459L1581 458L1582 458L1582 460L1583 460L1583 460L1584 460L1584 459L1585 459L1585 460L1586 460L1586 459L1587 459L1587 458L1588 458L1588 460L1589 460L1589 462L1590 462L1590 465L1591 465L1591 461L1592 461L1592 461L1593 461L1593 455L1594 455L1594 459L1595 459L1595 463L1596 463L1596 464L1597 464L1597 463L1598 463L1598 465L1599 465L1599 460L1600 460L1600 463L1601 463L1601 455L1602 455L1602 461L1603 461L1603 456L1604 456L1604 461L1605 461L1605 456L1606 456L1606 462L1607 462L1607 468L1608 468L1608 460L1609 460L1609 458L1610 458L1610 460L1611 460L1611 462L1612 462L1612 464L1613 464L1613 459L1614 459L1614 460L1615 460L1615 455L1616 455L1616 467L1617 467L1617 457L1618 457L1618 457L1619 457L1619 462L1620 462L1620 460L1621 460L1621 461L1622 461L1622 457L1623 457L1623 460L1624 460L1624 460L1625 460L1625 462L1626 462L1626 460L1627 460L1627 461L1628 461L1628 456L1629 456L1629 467L1630 467L1630 464L1631 464L1631 462L1632 462L1632 463L1633 463L1633 460L1634 460L1634 455L1635 455L1635 455L1636 455L1636 461L1637 461L1637 459L1638 459L1638 460L1639 460L1639 454L1640 454L1640 462L1641 462L1641 459L1642 459L1642 458L1643 458L1643 460L1644 460L1644 457L1645 457L1645 458L1646 458L1646 458L1647 458L1647 458L1648 458L1648 461L1649 461L1649 459L1650 459L1650 457L1651 457L1651 461L1652 461L1652 457L1653 457L1653 467L1654 467L1654 458L1655 458L1655 456L1656 456L1656 461L1657 461L1657 452L1658 452L1658 463L1659 463L1659 465L1660 465L1660 453L1661 453L1661 457L1662 457L1662 457L1663 457L1663 457L1664 457L1664 456L1665 456L1665 457L1666 457L1666 547Z" fill="url(#g)"/><rect x="0" y="464" width="1" height="83" fill="#000" fill-opacity="0.05"/><rect x="5" y="466" width="1" height="81" fill="#fff" fill-opacity="0.05"/><rect x="18" y="464" width="1" height="83" fill="#fff" fill-opacity="0.07"/><rect x="23" y="471" width="1" height="76" fill="#fff" fill-opacity="0.05"/><rect x="24" y="462" width="1" height="85" fill="#000" fill-opacity="0.05"/><rect x="35" y="466" width="1" height="81" fill="#fff" fill-opacity="0.06"/><rect x="44" y="466" width="1" height="81" fill="#fff" fill-opacity="0.07"/><rect x="48" y="463" width="1" height="84" fill="#000" fill-opacity="0.05"/><rect x="53" y="460" width="1" height="87" fill="#fff" fill-opacity="0.06"/><rect x="58" y="466" width="1" height="81" fill="#000" fill-opacity="0.06"/><rect x="60" y="464" width="1" height="83" fill="#000" fill-opacity="0.06"/><rect x="61" y="464" width="1" height="83" fill="#fff" fill-opacity="0.04"/><rect x="62" y="464" width="1" height="83" fill="#000" fill-opacity="0.05"/><rect x="65" y="465" width="1" height="82" fill="#000" fill-opacity="0.06"/><rect x="66" y="464" width="1" height="83" fill="#fff" fill-opacity="0.04"/><rect x="77" y="466" width="1" height="81" fill="#000" fill-opacity="0.06"/><rect x="78" y="465" width="1" height="82" fill="#000" fill-opacity="0.05"/><rect x="80" y="465" width="1" height="82" fill="#000" fill-opacity="0.06"/><rect x="93" y="461" width="1" height="86" fill="#000" fill-opacity="0.05"/><rect x="94" y="464" width="1" height="83" fill="#fff" fill-opacity="0.05"/><rect x="99" y="466" width="1" height="81" fill="#fff" fill-opacity="0.05"/><rect x="101" y="464" width="1" height="83" fill="#fff" fill-opacity="0.07"/><rect x="104" y="471" width="1" height="76" fill="#fff" fill-opacity="0.07"/><rect x="105" y="467" width="1" height="80" fill="#fff" fill-opacity="0.04"/><rect x="114" y="467" width="1" height="80" fill="#000" fill-opacity="0.04"/><rect x="115" y="464" width="1" height="83" fill="#000" fill-opacity="0.06"/><rect x="120" y="465" width="1" height="82" fill="#fff" fill-opacity="0.06"/><rect x="123" y="462" width="1" height="85" fill="#000" fill-opacity="0.04"/><rect x="128" y="460" width="1" height="87" fill="#fff" fill-opacity="0.04"/><rect x="129" y="463" width="1" height="84" fill="#fff" fill-opacity="0.07"/><rect x="136" y="474" width="1" height="73" fill="#fff" fill-opacity="0.04"/><rect x="141" y="470" width="1" height="77" fill="#000" fill-opacity="0.07"/><rect x="150" y="472" width="1" height="75" fill="#fff" fill-opacity="0.03"/><rect x="154" y="465" width="1" height="82" fill="#000" fill-opacity="0.06"/><rect x="157" y="464" width="1" height="83" fill="#000" fill-opacity="0.07"/><rect x="159" y="462" width="1" height="85" fill="#000" fill-opacity="0.04"/><rect x="168" y="472" width="1" height="75" fill="#fff" fill-opacity="0.06"/><rect x="169" y="466" width="1" height="81" fill="#fff" fill-opacity="0.04"/><rect x="175" y="464" width="1" height="83" fill="#000" fill-opacity="0.06"/><rect x="176" y="469" width="1" height="78" fill="#000" fill-opacity="0.05"/><rect x="184" y="468" width="1" height="79" fill="#fff" fill-opacity="0.08"/><rect x="186" y="470" width="1" height="77" fill="#000" fill-opacity="0.04"/><rect x="194" y="459" width="1" height="88" fill="#000" fill-opacity="0.03"/><rect x="197" y="460" width="1" height="87" fill="#000" fill-opacity="0.03"/><rect x="206" y="466" width="1" height="81" fill="#fff" fill-opacity="0.03"/><rect x="208" y="462" width="1" height="85" fill="#fff" fill-opacity="0.08"/><rect x="210" y="461" width="1" height="86" fill="#fff" fill-opacity="0.07"/><rect x="211" y="463" width="1" height="84" fill="#fff" fill-opacity="0.06"/><rect x="212" y="466" width="1" height="81" fill="#fff" fill-opacity="0.07"/><rect x="215" y="463" width="1" height="84" fill="#000" fill-opacity="0.06"/><rect x="222" y="468" width="1" height="79" fill="#000" fill-opacity="0.03"/><rect x="226" y="462" width="1" height="85" fill="#000" fill-opacity="0.06"/><rect x="227" y="464" width="1" height="83" fill="#000" fill-opacity="0.06"/><rect x="230" y="464" width="1" height="83" fill="#fff" fill-opacity="0.06"/><rect x="233" y="466" width="1" height="81" fill="#fff" fill-opacity="0.08"/><rect x="236" y="469" width="1" height="78" fill="#fff" fill-opacity="0.07"/><rect x="239" y="466" width="1" height="81" fill="#fff" fill-opacity="0.05"/><rect x="242" y="467" width="1" height="80" fill="#fff" fill-opacity="0.06"/><rect x="245" y="462" width="1" height="85" fill="#000" fill-opacity="0.03"/><rect x="246" y="459" width="1" height="88" fill="#fff" fill-opacity="0.06"/><rect x="259" y="463" width="1" height="84" fill="#000" fill-opacity="0.06"/><rect x="263" y="465" width="1" height="82" fill="#fff" fill-opacity="0.08"/><rect x="270" y="464" width="1" height="83" fill="#fff" fill-opacity="0.05"/><rect x="281" y="471" width="1" height="76" fill="#000" fill-opacity="0.04"/><rect x="290" y="467" width="1" height="80" fill="#fff" fill-opacity="0.07"/><rect x="296" y="466" width="1" height="81" fill="#fff" fill-opacity="0.06"/><rect x="304" y="469" width="1" height="78" fill="#fff" fill-opacity="0.04"/><rect x="307" y="465" width="1" height="82" fill="#000" fill-opacity="0.04"/><rect x="310" y="466" width="1" height="81" fill="#fff" fill-opacity="0.05"/><rect x="317" y="460" width="1" height="87" fill="#000" fill-opacity="0.06"/><rect x="327" y="470" width="1" height="77" fill="#000" fill-opacity="0.03"/><rect x="328" y="468" width="1" height="79" fill="#000" fill-opacity="0.04"/><rect x="329" y="473" width="1" height="74" fill="#fff" fill-opacity="0.04"/><rect x="335" y="466" width="1" height="81" fill="#fff" fill-opacity="0.04"/><rect x="341" y="463" width="1" height="84" fill="#fff" fill-opacity="0.08"/><rect x="344" y="469" width="1" height="78" fill="#000" fill-opacity="0.06"/><rect x="350" y="462" width="1" height="85" fill="#000" fill-opacity="0.04"/><rect x="352" y="469" width="1" height="78" fill="#fff" fill-opacity="0.06"/><rect x="355" y="463" width="1" height="84" fill="#fff" fill-opacity="0.04"/><rect x="356" y="464" width="1" height="83" fill="#fff" fill-opacity="0.08"/><rect x="361" y="472" width="1" height="75" fill="#000" fill-opacity="0.03"/><rect x="363" y="456" width="1" height="91" fill="#fff" fill-opacity="0.08"/><rect x="366" y="458" width="1" height="89" fill="#fff" fill-opacity="0.07"/><rect x="370" y="468" width="1" height="79" fill="#fff" fill-opacity="0.04"/><rect x="376" y="460" width="1" height="87" fill="#fff" fill-opacity="0.04"/><rect x="382" y="464" width="1" height="83" fill="#000" fill-opacity="0.06"/><rect x="385" y="461" width="1" height="86" fill="#000" fill-opacity="0.05"/><rect x="386" y="467" width="1" height="80" fill="#fff" fill-opacity="0.05"/><rect x="388" y="463" width="1" height="84" fill="#fff" fill-opacity="0.04"/><rect x="390" y="466" width="1" height="81" fill="#fff" fill-opacity="0.04"/><rect x="392" y="464" width="1" height="83" fill="#fff" fill-opacity="0.03"/><rect x="397" y="468" width="1" height="79" fill="#000" fill-opacity="0.04"/><rect x="403" y="463" width="1" height="84" fill="#fff" fill-opacity="0.08"/><rect x="406" y="465" width="1" height="82" fill="#fff" fill-opacity="0.07"/><rect x="408" y="466" width="1" height="81" fill="#fff" fill-opacity="0.04"/><rect x="412" y="465" width="1" height="82" fill="#000" fill-opacity="0.05"/><rect x="417" y="464" width="1" height="83" fill="#fff" fill-opacity="0.08"/><rect x="419" y="466" width="1" height="81" fill="#fff" fill-opacity="0.03"/><rect x="422" y="472" width="1" height="75" fill="#000" fill-opacity="0.05"/><rect x="429" y="465" width="1" height="82" fill="#fff" fill-opacity="0.07"/><rect x="435" y="465" width="1" height="82" fill="#fff" fill-opacity="0.04"/><rect x="438" y="464" width="1" height="83" fill="#fff" fill-opacity="0.04"/><rect x="439" y="465" width="1" height="82" fill="#000" fill-opacity="0.05"/><rect x="440" y="468" width="1" height="79" fill="#fff" fill-opacity="0.04"/><rect x="446" y="467" width="1" height="80" fill="#000" fill-opacity="0.07"/><rect x="465" y="462" width="1" height="85" fill="#000" fill-opacity="0.04"/><rect x="466" y="465" width="1" height="82" fill="#fff" fill-opacity="0.07"/><rect x="467" y="465" width="1" height="82" fill="#000" fill-opacity="0.05"/><rect x="472" y="472" width="1" height="75" fill="#fff" fill-opacity="0.04"/><rect x="473" y="459" width="1" height="88" fill="#fff" fill-opacity="0.08"/><rect x="474" y="466" width="1" height="81" fill="#fff" fill-opacity="0.04"/><rect x="478" y="466" width="1" height="81" fill="#000" fill-opacity="0.04"/><rect x="479" y="464" width="1" height="83" fill="#fff" fill-opacity="0.06"/><rect x="489" y="467" width="1" height="80" fill="#000" fill-opacity="0.07"/><rect x="490" y="463" width="1" height="84" fill="#fff" fill-opacity="0.03"/><rect x="501" y="469" width="1" height="78" fill="#fff" fill-opacity="0.04"/><rect x="507" y="471" width="1" height="76" fill="#fff" fill-opacity="0.03"/><rect x="510" y="458" width="1" height="89" fill="#fff" fill-opacity="0.06"/><rect x="516" y="471" width="1" height="76" fill="#000" fill-opacity="0.06"/><rect x="521" y="464" width="1" height="83" fill="#000" fill-opacity="0.05"/><rect x="525" y="465" width="1" height="82" fill="#fff" fill-opacity="0.08"/><rect x="539" y="459" width="1" height="88" fill="#fff" fill-opacity="0.04"/><rect x="542" y="462" width="1" height="85" fill="#000" fill-opacity="0.04"/><rect x="545" y="464" width="1" height="83" fill="#000" fill-opacity="0.05"/><rect x="551" y="466" width="1" height="81" fill="#fff" fill-opacity="0.05"/><rect x="552" y="459" width="1" height="88" fill="#000" fill-opacity="0.06"/><rect x="553" y="466" width="1" height="81" fill="#fff" fill-opacity="0.05"/><rect x="561" y="462" width="1" height="85" fill="#fff" fill-opacity="0.07"/><rect x="569" y="466" width="1" height="81" fill="#fff" fill-opacity="0.03"/><rect x="573" y="468" width="1" height="79" fill="#000" fill-opacity="0.03"/><rect x="574" y="467" width="1" height="80" fill="#fff" fill-opacity="0.06"/><rect x="575" y="465" width="1" height="82" fill="#000" fill-opacity="0.04"/><rect x="579" y="466" width="1" height="81" fill="#000" fill-opacity="0.03"/><rect x="582" y="466" width="1" height="81" fill="#fff" fill-opacity="0.05"/><rect x="588" y="461" width="1" height="86" fill="#000" fill-opacity="0.03"/><rect x="589" y="474" width="1" height="73" fill="#fff" fill-opacity="0.03"/><rect x="597" y="463" width="1" height="84" fill="#fff" fill-opacity="0.08"/><rect x="599" y="462" width="1" height="85" fill="#000" fill-opacity="0.04"/><rect x="606" y="463" width="1" height="84" fill="#fff" fill-opacity="0.06"/><rect x="607" y="467" width="1" height="80" fill="#fff" fill-opacity="0.07"/><rect x="611" y="471" width="1" height="76" fill="#fff" fill-opacity="0.06"/><rect x="613" y="462" width="1" height="85" fill="#fff" fill-opacity="0.04"/><rect x="615" y="464" width="1" height="83" fill="#fff" fill-opacity="0.06"/><rect x="621" y="463" width="1" height="84" fill="#000" fill-opacity="0.06"/><rect x="632" y="461" width="1" height="86" fill="#fff" fill-opacity="0.04"/><rect x="641" y="465" width="1" height="82" fill="#000" fill-opacity="0.05"/><rect x="642" y="464" width="1" height="83" fill="#fff" fill-opacity="0.03"/><rect x="644" y="461" width="1" height="86" fill="#fff" fill-opacity="0.08"/><rect x="647" y="471" width="1" height="76" fill="#fff" fill-opacity="0.04"/><rect x="654" y="468" width="1" height="79" fill="#fff" fill-opacity="0.03"/><rect x="669" y="465" width="1" height="82" fill="#fff" fill-opacity="0.05"/><rect x="672" y="463" width="1" height="84" fill="#000" fill-opacity="0.07"/><rect x="674" y="465" width="1" height="82" fill="#fff" fill-opacity="0.05"/><rect x="677" y="464" width="1" height="83" fill="#000" fill-opacity="0.06"/><rect x="680" y="465" width="1" height="82" fill="#fff" fill-opacity="0.05"/><rect x="681" y="466" width="1" height="81" fill="#fff" fill-opacity="0.08"/><rect x="682" y="466" width="1" height="81" fill="#000" fill-opacity="0.04"/><rect x="684" y="465" width="1" height="82" fill="#fff" fill-opacity="0.04"/><rect x="685" y="463" width="1" height="84" fill="#000" fill-opacity="0.04"/><rect x="688" y="465" width="1" height="82" fill="#fff" fill-opacity="0.04"/><rect x="692" y="464" width="1" height="83" fill="#fff" fill-opacity="0.04"/><rect x="694" y="468" width="1" height="79" fill="#fff" fill-opacity="0.04"/><rect x="705" y="465" width="1" height="82" fill="#fff" fill-opacity="0.04"/><rect x="707" y="464" width="1" height="83" fill="#fff" fill-opacity="0.07"/><rect x="713" y="466" width="1" height="81" fill="#fff" fill-opacity="0.07"/><rect x="715" y="463" width="1" height="84" fill="#fff" fill-opacity="0.07"/><rect x="717" y="462" width="1" height="85" fill="#fff" fill-opacity="0.05"/><rect x="721" y="461" width="1" height="86" fill="#000" fill-opacity="0.06"/><rect x="733" y="467" width="1" height="80" fill="#fff" fill-opacity="0.04"/><rect x="750" y="468" width="1" height="79" fill="#fff" fill-opacity="0.06"/><rect x="757" y="459" width="1" height="88" fill="#fff" fill-opacity="0.08"/><rect x="761" y="459" width="1" height="88" fill="#000" fill-opacity="0.06"/><rect x="771" y="418" width="1" height="129" fill="#fff" fill-opacity="0.05"/><rect x="772" y="433" width="1" height="114" fill="#000" fill-opacity="0.06"/><rect x="774" y="447" width="1" height="100" fill="#000" fill-opacity="0.03"/><rect x="776" y="451" width="1" height="96" fill="#fff" fill-opacity="0.05"/><rect x="789" y="466" width="1" height="81" fill="#fff" fill-opacity="0.06"/><rect x="801" y="465" width="1" height="82" fill="#fff" fill-opacity="0.08"/><rect x="802" y="463" width="1" height="84" fill="#000" fill-opacity="0.05"/><rect x="806" y="468" width="1" height="79" fill="#fff" fill-opacity="0.06"/><rect x="824" y="463" width="1" height="84" fill="#fff" fill-opacity="0.06"/><rect x="827" y="465" width="1" height="82" fill="#fff" fill-opacity="0.08"/><rect x="831" y="456" width="1" height="91" fill="#fff" fill-opacity="0.08"/><rect x="838" y="466" width="1" height="81" fill="#000" fill-opacity="0.05"/><rect x="845" y="462" width="1" height="85" fill="#fff" fill-opacity="0.06"/><rect x="854" y="463" width="1" height="84" fill="#fff" fill-opacity="0.03"/><rect x="861" y="463" width="1" height="84" fill="#fff" fill-opacity="0.06"/><rect x="872" y="460" width="1" height="87" fill="#000" fill-opacity="0.07"/><rect x="874" y="466" width="1" height="81" fill="#fff" fill-opacity="0.03"/><rect x="877" y="466" width="1" height="81" fill="#fff" fill-opacity="0.05"/><rect x="883" y="466" width="1" height="81" fill="#fff" fill-opacity="0.04"/><rect x="887" y="464" width="1" height="83" fill="#fff" fill-opacity="0.04"/><rect x="888" y="466" width="1" height="81" fill="#fff" fill-opacity="0.04"/><rect x="891" y="465" width="1" height="82" fill="#fff" fill-opacity="0.05"/><rect x="897" y="464" width="1" height="83" fill="#fff" fill-opacity="0.06"/><rect x="898" y="462" width="1" height="85" fill="#fff" fill-opacity="0.04"/><rect x="899" y="464" width="1" height="83" fill="#000" fill-opacity="0.06"/><rect x="907" y="463" width="1" height="84" fill="#fff" fill-opacity="0.07"/><rect x="909" y="466" width="1" height="81" fill="#000" fill-opacity="0.06"/><rect x="921" y="468" width="1" height="79" fill="#fff" fill-opacity="0.05"/><rect x="930" y="466" width="1" height="81" fill="#fff" fill-opacity="0.04"/><rect x="933" y="465" width="1" height="82" fill="#000" fill-opacity="0.04"/><rect x="956" y="462" width="1" height="85" fill="#fff" fill-opacity="0.06"/><rect x="957" y="459" width="1" height="88" fill="#000" fill-opacity="0.04"/><rect x="958" y="466" width="1" height="81" fill="#000" fill-opacity="0.06"/><rect x="959" y="464" width="1" height="83" fill="#fff" fill-opacity="0.04"/><rect x="960" y="463" width="1" height="84" fill="#000" fill-opacity="0.04"/><rect x="967" y="467" width="1" height="80" fill="#fff" fill-opacity="0.08"/><rect x="969" y="468" width="1" height="79" fill="#fff" fill-opacity="0.07"/><rect x="972" y="463" width="1" height="84" fill="#fff" fill-opacity="0.07"/><rect x="976" y="468" width="1" height="79" fill="#000" fill-opacity="0.03"/><rect x="977" y="466" width="1" height="81" fill="#fff" fill-opacity="0.03"/><rect x="980" y="468" width="1" height="79" fill="#fff" fill-opacity="0.04"/><rect x="981" y="463" width="1" height="84" fill="#fff" fill-opacity="0.06"/><rect x="993" y="461" width="1" height="86" fill="#fff" fill-opacity="0.04"/><rect x="994" y="458" width="1" height="89" fill="#fff" fill-opacity="0.05"/><rect x="996" y="469" width="1" height="78" fill="#000" fill-opacity="0.05"/><rect x="998" y="462" width="1" height="85" fill="#000" fill-opacity="0.05"/><rect x="1010" y="463" width="1" height="84" fill="#fff" fill-opacity="0.04"/><rect x="1013" y="470" width="1" height="77" fill="#000" fill-opacity="0.06"/><rect x="1016" y="465" width="1" height="82" fill="#000" fill-opacity="0.06"/><rect x="1039" y="475" width="1" height="72" fill="#fff" fill-opacity="0.07"/><rect x="1043" y="465" width="1" height="82" fill="#fff" fill-opacity="0.08"/><rect x="1045" y="469" width="1" height="78" fill="#fff" fill-opacity="0.07"/><rect x="1051" y="470" width="1" height="77" fill="#fff" fill-opacity="0.07"/><rect x="1052" y="466" width="1" height="81" fill="#fff" fill-opacity="0.04"/><rect x="1053" y="467" width="1" height="80" fill="#fff" fill-opacity="0.07"/><rect x="1059" y="466" width="1" height="81" fill="#fff" fill-opacity="0.05"/><rect x="1077" y="468" width="1" height="79" fill="#fff" fill-opacity="0.07"/><rect x="1078" y="466" width="1" height="81" fill="#fff" fill-opacity="0.06"/><rect x="1079" y="463" width="1" height="84" fill="#000" fill-opacity="0.07"/><rect x="1082" y="471" width="1" height="76" fill="#fff" fill-opacity="0.06"/><rect x="1086" y="468" width="1" height="79" fill="#000" fill-opacity="0.05"/><rect x="1087" y="469" width="1" height="78" fill="#fff" fill-opacity="0.07"/><rect x="1089" y="464" width="1" height="83" fill="#000" fill-opacity="0.05"/><rect x="1095" y="470" width="1" height="77" fill="#fff" fill-opacity="0.04"/><rect x="1097" y="467" width="1" height="80" fill="#fff" fill-opacity="0.04"/><rect x="1100" y="459" width="1" height="88" fill="#fff" fill-opacity="0.08"/><rect x="1114" y="465" width="1" height="82" fill="#fff" fill-opacity="0.08"/><rect x="1123" y="467" width="1" height="80" fill="#fff" fill-opacity="0.06"/><rect x="1126" y="464" width="1" height="83" fill="#fff" fill-opacity="0.04"/><rect x="1134" y="466" width="1" height="81" fill="#fff" fill-opacity="0.07"/><rect x="1138" y="462" width="1" height="85" fill="#fff" fill-opacity="0.06"/><rect x="1143" y="466" width="1" height="81" fill="#000" fill-opacity="0.04"/><rect x="1144" y="470" width="1" height="77" fill="#fff" fill-opacity="0.04"/><rect x="1161" y="465" width="1" height="82" fill="#000" fill-opacity="0.03"/><rect x="1165" y="467" width="1" height="80" fill="#fff" fill-opacity="0.07"/><rect x="1172" y="463" width="1" height="84" fill="#000" fill-opacity="0.03"/><rect x="1177" y="469" width="1" height="78" fill="#000" fill-opacity="0.05"/><rect x="1181" y="463" width="1" height="84" fill="#000" fill-opacity="0.04"/><rect x="1182" y="462" width="1" height="85" fill="#fff" fill-opacity="0.07"/><rect x="1183" y="460" width="1" height="87" fill="#fff" fill-opacity="0.08"/><rect x="1191" y="472" width="1" height="75" fill="#000" fill-opacity="0.06"/><rect x="1193" y="463" width="1" height="84" fill="#fff" fill-opacity="0.07"/><rect x="1195" y="464" width="1" height="83" fill="#fff" fill-opacity="0.05"/><rect x="1202" y="463" width="1" height="84" fill="#fff" fill-opacity="0.07"/><rect x="1207" y="467" width="1" height="80" fill="#fff" fill-opacity="0.04"/><rect x="1208" y="463" width="1" height="84" fill="#fff" fill-opacity="0.06"/><rect x="1210" y="463" width="1" height="84" fill="#fff" fill-opacity="0.06"/><rect x="1215" y="479" width="1" height="68" fill="#000" fill-opacity="0.03"/><rect x="1222" y="463" width="1" height="84" fill="#fff" fill-opacity="0.05"/><rect x="1233" y="475" width="1" height="72" fill="#fff" fill-opacity="0.03"/><rect x="1234" y="464" width="1" height="83" fill="#fff" fill-opacity="0.05"/><rect x="1235" y="462" width="1" height="85" fill="#fff" fill-opacity="0.06"/><rect x="1241" y="465" width="1" height="82" fill="#fff" fill-opacity="0.05"/><rect x="1246" y="466" width="1" height="81" fill="#fff" fill-opacity="0.03"/><rect x="1247" y="465" width="1" height="82" fill="#fff" fill-opacity="0.07"/><rect x="1249" y="465" width="1" height="82" fill="#fff" fill-opacity="0.06"/><rect x="1250" y="460" width="1" height="87" fill="#000" fill-opacity="0.05"/><rect x="1252" y="466" width="1" height="81" fill="#fff" fill-opacity="0.07"/><rect x="1255" y="466" width="1" height="81" fill="#fff" fill-opacity="0.06"/><rect x="1258" y="467" width="1" height="80" fill="#fff" fill-opacity="0.08"/><rect x="1259" y="461" width="1" height="86" fill="#000" fill-opacity="0.04"/><rect x="1261" y="462" width="1" height="85" fill="#fff" fill-opacity="0.03"/><rect x="1271" y="463" width="1" height="84" fill="#fff" fill-opacity="0.03"/><rect x="1275" y="462" width="1" height="85" fill="#fff" fill-opacity="0.06"/><rect x="1277" y="464" width="1" height="83" fill="#fff" fill-opacity="0.06"/><rect x="1284" y="463" width="1" height="84" fill="#fff" fill-opacity="0.05"/><rect x="1285" y="460" width="1" height="87" fill="#fff" fill-opacity="0.06"/><rect x="1289" y="464" width="1" height="83" fill="#000" fill-opacity="0.06"/><rect x="1291" y="463" width="1" height="84" fill="#fff" fill-opacity="0.05"/><rect x="1292" y="459" width="1" height="88" fill="#000" fill-opacity="0.05"/><rect x="1301" y="461" width="1" height="86" fill="#000" fill-opacity="0.03"/><rect x="1305" y="465" width="1" height="82" fill="#fff" fill-opacity="0.07"/><rect x="1307" y="471" width="1" height="76" fill="#fff" fill-opacity="0.05"/><rect x="1309" y="465" width="1" height="82" fill="#000" fill-opacity="0.03"/><rect x="1322" y="461" width="1" height="86" fill="#fff" fill-opacity="0.06"/><rect x="1334" y="466" width="1" height="81" fill="#fff" fill-opacity="0.06"/><rect x="1365" y="468" width="1" height="79" fill="#000" fill-opacity="0.04"/><rect x="1366" y="465" width="1" height="82" fill="#000" fill-opacity="0.07"/><rect x="1373" y="459" width="1" height="88" fill="#fff" fill-opacity="0.07"/><rect x="1387" y="460" width="1" height="87" fill="#fff" fill-opacity="0.04"/><rect x="1395" y="460" width="1" height="87" fill="#fff" fill-opacity="0.07"/><rect x="1397" y="463" width="1" height="84" fill="#fff" fill-opacity="0.08"/><rect x="1402" y="470" width="1" height="77" fill="#000" fill-opacity="0.05"/><rect x="1404" y="463" width="1" height="84" fill="#000" fill-opacity="0.04"/><rect x="1409" y="463" width="1" height="84" fill="#fff" fill-opacity="0.03"/><rect x="1420" y="460" width="1" height="87" fill="#000" fill-opacity="0.04"/><rect x="1424" y="462" width="1" height="85" fill="#fff" fill-opacity="0.04"/><rect x="1429" y="461" width="1" height="86" fill="#fff" fill-opacity="0.08"/><rect x="1435" y="462" width="1" height="85" fill="#000" fill-opacity="0.06"/><rect x="1441" y="461" width="1" height="86" fill="#000" fill-opacity="0.05"/><rect x="1449" y="461" width="1" height="86" fill="#fff" fill-opacity="0.04"/><rect x="1453" y="459" width="1" height="88" fill="#fff" fill-opacity="0.05"/><rect x="1455" y="459" width="1" height="88" fill="#000" fill-opacity="0.03"/><rect x="1456" y="462" width="1" height="85" fill="#fff" fill-opacity="0.05"/><rect x="1463" y="461" width="1" height="86" fill="#fff" fill-opacity="0.06"/><rect x="1474" y="462" width="1" height="85" fill="#fff" fill-opacity="0.08"/><rect x="1476" y="465" width="1" height="82" fill="#fff" fill-opacity="0.06"/><rect x="1486" y="459" width="1" height="88" fill="#fff" fill-opacity="0.06"/><rect x="1496" y="463" width="1" height="84" fill="#000" fill-opacity="0.04"/><rect x="1502" y="456" width="1" height="91" fill="#fff" fill-opacity="0.04"/><rect x="1507" y="463" width="1" height="84" fill="#fff" fill-opacity="0.06"/><rect x="1508" y="457" width="1" height="90" fill="#fff" fill-opacity="0.06"/><rect x="1511" y="458" width="1" height="89" fill="#fff" fill-opacity="0.05"/><rect x="1513" y="471" width="1" height="76" fill="#fff" fill-opacity="0.05"/><rect x="1529" y="460" width="1" height="87" fill="#fff" fill-opacity="0.06"/><rect x="1530" y="465" width="1" height="82" fill="#000" fill-opacity="0.07"/><rect x="1535" y="463" width="1" height="84" fill="#fff" fill-opacity="0.07"/><rect x="1537" y="463" width="1" height="84" fill="#000" fill-opacity="0.07"/><rect x="1546" y="460" width="1" height="87" fill="#000" fill-opacity="0.04"/><rect x="1547" y="465" width="1" height="82" fill="#000" fill-opacity="0.03"/><rect x="1549" y="468" width="1" height="79" fill="#fff" fill-opacity="0.04"/><rect x="1563" y="464" width="1" height="83" fill="#fff" fill-opacity="0.08"/><rect x="1567" y="451" width="1" height="96" fill="#fff" fill-opacity="0.06"/><rect x="1571" y="464" width="1" height="83" fill="#fff" fill-opacity="0.08"/><rect x="1584" y="459" width="1" height="88" fill="#000" fill-opacity="0.06"/><rect x="1594" y="459" width="1" height="88" fill="#fff" fill-opacity="0.08"/><rect x="1598" y="465" width="1" height="82" fill="#fff" fill-opacity="0.07"/><rect x="1601" y="455" width="1" height="92" fill="#fff" fill-opacity="0.04"/><rect x="1608" y="460" width="1" height="87" fill="#000" fill-opacity="0.06"/><rect x="1614" y="460" width="1" height="87" fill="#fff" fill-opacity="0.07"/><rect x="1623" y="460" width="1" height="87" fill="#fff" fill-opacity="0.04"/><rect x="1626" y="460" width="1" height="87" fill="#fff" fill-opacity="0.04"/><rect x="1629" y="467" width="1" height="80" fill="#fff" fill-opacity="0.04"/><rect x="1631" y="462" width="1" height="85" fill="#fff" fill-opacity="0.05"/><rect x="1636" y="461" width="1" height="86" fill="#000" fill-opacity="0.07"/><rect x="1637" y="459" width="1" height="88" fill="#fff" fill-opacity="0.03"/><rect x="1650" y="457" width="1" height="90" fill="#000" fill-opacity="0.06"/><rect x="1652" y="457" width="1" height="90" fill="#fff" fill-opacity="0.06"/><rect x="1654" y="458" width="1" height="89" fill="#fff" fill-opacity="0.07"/><rect x="1656" y="461" width="1" height="86" fill="#000" fill-opacity="0.04"/><rect x="1657" y="452" width="1" height="95" fill="#fff" fill-opacity="0.04"/><rect x="1658" y="463" width="1" height="84" fill="#fff" fill-opacity="0.05"/><rect x="1665" y="457" width="1" height="90" fill="#fff" fill-opacity="0.04"/><rect x="770" y="440" width="2" height="107" fill="#3a2a00" fill-opacity="0.25"/><rect x="1574" y="450" width="1" height="97" fill="#3a2a00" fill-opacity="0.3"/><rect x="0" y="457" width="1666" height="1" fill="#ffe0c0" fill-opacity="0.12"/><rect x="0" y="483" width="1666" height="1" fill="#ffe0c0" fill-opacity="0.12"/><rect x="0" y="508" width="1666" height="1" fill="#ffe0c0" fill-opacity="0.12"/><rect x="123" y="440" width="1" height="107" fill="#ffe0c0" fill-opacity="0.12"/><rect x="322" y="440" width="1" height="107" fill="#ffe0c0" fill-opacity="0.12"/><rect x="520" y="440" width="1" height="107" fill="#ffe0c0" fill-opacity="0.12"/><rect x="719" y="440" width="1" height="107" fill="#ffe0c0" fill-opacity="0.12"/><rect x="918" y="440" width="1" height="107" fill="#ffe0c0" fill-opacity="0.12"/><rect x="1117" y="440" width="1" height="107" fill="#ffe0c0" fill-opacity="0.12"/><rect x="1316" y="440" width="1" height="107" fill="#ffe0c0" fill-opacity="0.12"/><rect x="1514" y="440" width="1" height="107" fill="#ffe0c0" fill-opacity="0.12"/><rect x="1157" y="177" width="19" height="370" fill="#008080"/><path d="M1157 547L1157 466L1158 466L1158 465L1159 465L1159 466L1160 466L1160 467L1161 467L1161 465L1162 465L1162 465L1163 465L1163 462L1164 462L1164 463L1165 463L1165 467L1166 467L1166 460L1167 460L1167 464L1168 464L1168 466L1169 466L1169 462L1170 462L1170 461L1171 461L1171 464L1172 464L1172 463L1173 463L1173 464L1174 464L1174 462L1175 462L1175 465L1176 465L1176 547Z" fill="url(#pb)"/><rect x="0" y="547" width="1666" height="20" fill="#003000"/><rect x="123" y="547" width="1" height="20" fill="#294428"/><rect x="322" y="547" width="1" height="20" fill="#294428"/><rect x="520" y="547" width="1" height="20" fill="#294428"/><rect x="719" y="547" width="1" height="20" fill="#294428"/><rect x="918" y="547" width="1" height="20" fill="#294428"/><rect x="1117" y="547" width="1" height="20" fill="#294428"/><rect x="1316" y="547" width="1" height="20" fill="#294428"/><rect x="1514" y="547" width="1" height="20" fill="#294428"/><text x="114" y="565" fill="#00ffff" font-family="Liberation Sans" font-size="14" textLength="33" lengthAdjust="spacingAndGlyphs">1,830</text><text x="313" y="565" fill="#00ffff" font-family="Liberation Sans" font-size="14" textLength="33" lengthAdjust="spacingAndGlyphs">1,835</text><text x="511" y="565" fill="#00ffff" font-family="Liberation Sans" font-size="14" textLength="33" lengthAdjust="spacingAndGlyphs">1,840</text><text x="710" y="565" fill="#00ffff" font-family="Liberation Sans" font-size="14" textLength="33" lengthAdjust="spacingAndGlyphs">1,845</text><text x="909" y="565" fill="#00ffff" font-family="Liberation Sans" font-size="14" textLength="33" lengthAdjust="spacingAndGlyphs">1,850</text><text x="1108" y="565" fill="#00ffff" font-family="Liberation Sans" font-size="14" textLength="33" lengthAdjust="spacingAndGlyphs">1,855</text><text x="1307" y="565" fill="#00ffff" font-family="Liberation Sans" font-size="14" textLength="33" lengthAdjust="spacingAndGlyphs">1,860</text><text x="1505" y="565" fill="#00ffff" font-family="Liberation Sans" font-size="14" textLength="33" lengthAdjust="spacingAndGlyphs">1,865</text><text x="3" y="208" fill="#00e8e8" font-family="Liberation Sans" font-size="14">-10</text><text x="3" y="234" fill="#00e8e8" font-family="Liberation Sans" font-size="14">-20</text><text x="3" y="259" fill="#00e8e8" font-family="Liberation Sans" font-size="14">-30</text><text x="3" y="285" fill="#00e8e8" font-family="Liberation Sans" font-size="14">-40</text><text x="3" y="310" fill="#00e8e8" font-family="Liberation Sans" font-size="14">-50</text><text x="3" y="336" fill="#00e8e8" font-family="Liberation Sans" font-size="14">-60</text><text x="3" y="361" fill="#00e8e8" font-family="Liberation Sans" font-size="14">-70</text><text x="3" y="387" fill="#00e8e8" font-family="Liberation Sans" font-size="14">-80</text><text x="3" y="412" fill="#00e8e8" font-family="Liberation Sans" font-size="14">-90</text><text x="3" y="438" fill="#00e8e8" font-family="Liberation Sans" font-size="14">-100</text><text x="3" y="463" fill="#60e8e0" font-family="Liberation Sans" font-size="14">-110</text><text x="3" y="489" fill="#a8ece0" font-family="Liberation Sans" font-size="14">-120</text><text x="3" y="514" fill="#a8ece0" font-family="Liberation Sans" font-size="14">-130</text><rect x="1190" y="177" width="1" height="390" fill="#ff0000"/><g stroke="#ff0000" stroke-width="4" stroke-linecap="square" fill="none" shape-rendering="auto"><path d="M1481 341L1551 406M1505 404L1551 406L1548 374"/></g></svg>
<div class="b" style="left:10px;top:577px"><span>MIN</span></div>
<div class="b on" style="left:70px;top:577px"><span>CTR</span></div>
<div class="b" style="left:130px;top:577px"><span>LOG</span></div>
<div class="b" style="left:210px;top:577px"><span>NR</span></div>
<div class="b" style="left:270px;top:577px"><span>ANF</span></div>
<div class="b" style="left:330px;top:577px"><span>NB</span></div>
<div class="b" style="left:390px;top:577px"><span>NB2</span></div>
<div class="b on" style="left:450px;top:577px"><span>SR</span></div>
<div class="b" style="left:510px;top:577px"><span>BCI</span></div>
<div class="b" style="left:570px;top:577px"><span>BIN</span></div>
<div class="b" style="left:630px;top:577px"><span>SQL</span></div>
<div class="sk" style="left:690px;top:578px;width:59px;height:21px;line-height:19px;font-size:14px;padding-left:3px">132</div>
<div class="sp u" style="left:731px;top:579px;width:16px;height:9px"></div>
<div class="sp d" style="left:731px;top:588px;width:16px;height:9px"></div>
<div class="a" style="left:760px;top:587px;width:104px;height:3px;background:#000"></div>
<div class="a" style="left:760px;top:597px;width:104px;height:3px;background:#000"></div>
<div class="b" style="left:1356px;top:577px"><span>MRX</span></div>
<div class="b on" style="left:1416px;top:577px"><span>VFOA</span></div>
<div class="b" style="left:1476px;top:577px"><span>VFOB</span></div>
<div class="b" style="left:1536px;top:577px"><span>RIT</span></div>
<div class="b" style="left:1596px;top:577px"><span>XIT</span></div>
<div class="sk" style="left:11px;top:628px;width:178px;height:24px;line-height:22px;font-size:14px">Panadapter</div>
<div class="arr" style="left:168px;top:629px;width:19px;height:21px"></div>
<div class="b" style="left:210px;top:627px"><span>STX</span></div>
<div class="b on" style="left:270px;top:627px"><span>AVG</span></div>
<div class="b" style="left:330px;top:627px"><span>Peak</span></div>
<div class="sk" style="left:410px;top:628px;width:88px;height:23px;line-height:21px;font-size:14px">Signal</div>
<div class="arr" style="left:477px;top:629px;width:19px;height:20px"></div>
<div class="sk" style="left:500px;top:628px;width:89px;height:23px;line-height:21px;font-size:14px">Fwd Pwr</div>
<div class="arr" style="left:568px;top:629px;width:19px;height:20px"></div>
<div class="b" style="left:611px;top:628px;height:28px;line-height:27px"><span>Center</span></div>
<div class="a" style="left:675px;top:634px;font-size:14px;line-height:16px;color:#fff;font-weight:bold;letter-spacing:.3px">Смещение:</div>
<div class="a" style="left:1441px;top:634px;font-size:14px;line-height:16px;color:#fff;font-weight:bold;letter-spacing:.3px">Масштаб:</div>
<div class="a" style="left:769px;top:640px;width:659px;height:1px;background:#404040"></div>
<div class="a" style="left:769px;top:641px;width:659px;height:2px;background:#fffbf0"></div>
<div class="a" style="left:1427px;top:639px;width:1px;height:3px;background:#fffbf0"></div>
<div class="a" style="left:776px;top:656px;width:1px;height:1px;background:#000"></div>
<div class="a" style="left:808px;top:656px;width:1px;height:1px;background:#000"></div>
<div class="a" style="left:840px;top:656px;width:1px;height:1px;background:#000"></div>
<div class="a" style="left:872px;top:656px;width:1px;height:1px;background:#000"></div>
<div class="a" style="left:905px;top:656px;width:1px;height:1px;background:#000"></div>
<div class="a" style="left:937px;top:656px;width:1px;height:1px;background:#000"></div>
<div class="a" style="left:969px;top:656px;width:1px;height:1px;background:#000"></div>
<div class="a" style="left:1002px;top:656px;width:1px;height:1px;background:#000"></div>
<div class="a" style="left:1034px;top:656px;width:1px;height:1px;background:#000"></div>
<div class="a" style="left:1066px;top:656px;width:1px;height:1px;background:#000"></div>
<div class="a" style="left:1098px;top:656px;width:1px;height:1px;background:#000"></div>
<div class="a" style="left:1131px;top:656px;width:1px;height:1px;background:#000"></div>
<div class="a" style="left:1163px;top:656px;width:1px;height:1px;background:#000"></div>
<div class="a" style="left:1195px;top:656px;width:1px;height:1px;background:#000"></div>
<div class="a" style="left:1228px;top:656px;width:1px;height:1px;background:#000"></div>
<div class="a" style="left:1260px;top:656px;width:1px;height:1px;background:#000"></div>
<div class="a" style="left:1292px;top:656px;width:1px;height:1px;background:#000"></div>
<div class="a" style="left:1325px;top:656px;width:1px;height:1px;background:#000"></div>
<div class="a" style="left:1357px;top:656px;width:1px;height:1px;background:#000"></div>
<div class="a" style="left:1389px;top:656px;width:1px;height:1px;background:#000"></div>
<div class="a" style="left:1422px;top:656px;width:1px;height:1px;background:#000"></div>
<svg class="a" style="left:1092px;top:629px" width="14" height="27" viewBox="0 0 14 27"><path d="M0.5 0.5H12.5V20L6.5 26L0.5 20Z" fill="#d4d0c8"/><path d="M0.5 20V0.5H12.5" stroke="#fff" fill="none"/><path d="M11.5 1.5V19.6L6.5 24.6" stroke="#808080" fill="none"/><path d="M3 20.5H11" stroke="#606060" fill="none"/><path d="M12.5 0.5V20L6.5 26" stroke="#404040" fill="none"/><path d="M0.5 20L6.5 26" stroke="#fff" fill="none"/></svg>
<div class="a" style="left:1523px;top:640px;width:125px;height:1px;background:#404040"></div>
<div class="a" style="left:1523px;top:641px;width:125px;height:2px;background:#fffbf0"></div>
<div class="a" style="left:1647px;top:639px;width:1px;height:3px;background:#fffbf0"></div>
<div class="a" style="left:1531px;top:656px;width:1px;height:1px;background:#000"></div>
<div class="a" style="left:1569px;top:656px;width:1px;height:1px;background:#000"></div>
<div class="a" style="left:1607px;top:656px;width:1px;height:1px;background:#000"></div>
<div class="a" style="left:1640px;top:656px;width:1px;height:1px;background:#000"></div>
<svg class="a" style="left:1525px;top:629px" width="14" height="27" viewBox="0 0 14 27"><path d="M0.5 0.5H12.5V20L6.5 26L0.5 20Z" fill="#d4d0c8"/><path d="M0.5 20V0.5H12.5" stroke="#fff" fill="none"/><path d="M11.5 1.5V19.6L6.5 24.6" stroke="#808080" fill="none"/><path d="M3 20.5H11" stroke="#606060" fill="none"/><path d="M12.5 0.5V20L6.5 26" stroke="#404040" fill="none"/><path d="M0.5 20L6.5 26" stroke="#fff" fill="none"/></svg>
<div class="b on" style="left:10px;top:677px"><span>160</span></div>
<div class="b" style="left:70px;top:677px"><span>80</span></div>
<div class="b" style="left:130px;top:677px"><span>60</span></div>
<div class="b" style="left:10px;top:707px"><span>40</span></div>
<div class="b" style="left:70px;top:707px"><span>30</span></div>
<div class="b" style="left:130px;top:707px"><span>20</span></div>
<div class="b" style="left:10px;top:737px"><span>17</span></div>
<div class="b" style="left:70px;top:737px"><span>15</span></div>
<div class="b" style="left:130px;top:737px"><span>12</span></div>
<div class="b" style="left:10px;top:767px"><span>10</span></div>
<div class="b" style="left:70px;top:767px"><span>6</span></div>
<div class="b dis" style="left:130px;top:767px"><span>2</span></div>
<div class="b" style="left:10px;top:797px"><span>GEN</span></div>
<div class="b" style="left:70px;top:797px"><span>WWV</span></div>
<div class="b" style="left:130px;top:797px"><span>VHF+</span></div>
<div class="b" style="left:210px;top:677px"><span>USB</span></div>
<div class="b" style="left:270px;top:677px"><span>CWU</span></div>
<div class="b" style="left:330px;top:677px"><span>DIGU</span></div>
<div class="b" style="left:210px;top:707px"><span>LSB</span></div>
<div class="b on" style="left:270px;top:707px"><span>CWL</span></div>
<div class="b" style="left:330px;top:707px"><span>DIGL</span></div>
<div class="b" style="left:210px;top:737px"><span>AM</span></div>
<div class="b" style="left:270px;top:737px"><span>FMN</span></div>
<div class="b" style="left:330px;top:737px"><span>DRM</span></div>
<div class="b" style="left:210px;top:767px"><span>SAM</span></div>
<div class="b" style="left:270px;top:767px"><span>DSB</span></div>
<div class="b" style="left:330px;top:767px"><span>SPEC</span></div>
<div class="b" style="left:210px;top:797px"><span></span></div>
<div class="b" style="left:270px;top:797px"><span></span></div>
<div class="b" style="left:330px;top:797px"><span></span></div>
<div class="b" style="left:410px;top:677px"><span>1.0k</span></div>
<div class="b" style="left:470px;top:677px"><span>800</span></div>
<div class="b" style="left:530px;top:677px"><span>750</span></div>
<div class="b" style="left:410px;top:707px"><span>600</span></div>
<div class="b on" style="left:470px;top:707px"><span>500</span></div>
<div class="b" style="left:530px;top:707px"><span>400</span></div>
<div class="b" style="left:410px;top:737px"><span>250</span></div>
<div class="b" style="left:470px;top:737px"><span>100</span></div>
<div class="b" style="left:530px;top:737px"><span>50</span></div>
<div class="b" style="left:410px;top:767px"><span>25</span></div>
<div class="b" style="left:470px;top:767px"><span>Var 1</span></div>
<div class="b" style="left:530px;top:767px"><span>Var 2</span></div>
<div class="b" style="left:410px;top:797px"><span></span></div>
<div class="b" style="left:470px;top:797px"><span>Var 2</span></div>
<div class="b" style="left:530px;top:797px"><span>Reset</span></div>
<div class="a" style="left:634px;top:675px;font-size:14px;line-height:16px;color:#fff;font-weight:bold;letter-spacing:.3px">АРУ (Тип)</div>
<div class="a" style="left:788px;top:675px;font-size:14px;line-height:16px;color:#fff;font-weight:bold;letter-spacing:.3px">Предусиление</div>
<div class="sk" style="left:611px;top:697px;width:118px;height:24px;line-height:22px;font-size:14px">Custom</div>
<div class="arr" style="left:708px;top:698px;width:19px;height:21px"></div>
<div class="sk" style="left:781px;top:697px;width:118px;height:24px;line-height:22px;font-size:14px">Off</div>
<div class="arr" style="left:878px;top:698px;width:19px;height:21px"></div>
<div class="a" style="left:612px;top:744px;font-size:14px;line-height:16px;color:#fff;font-weight:bold;letter-spacing:.3px">AF:</div>
<div class="a" style="left:612px;top:774px;font-size:14px;line-height:16px;color:#fff;font-weight:bold;letter-spacing:.3px">AGC-T:</div>
<div class="a" style="left:612px;top:804px;font-size:14px;line-height:16px;color:#fff;font-weight:bold;letter-spacing:.3px">Drive:</div>
<div class="a" style="left:679px;top:750px;width:152px;height:1px;background:#404040"></div>
<div class="a" style="left:679px;top:751px;width:152px;height:2px;background:#fffbf0"></div>
<div class="a" style="left:830px;top:749px;width:1px;height:3px;background:#fffbf0"></div>
<svg class="a" style="left:683px;top:739px" width="14" height="27" viewBox="0 0 14 27"><path d="M0.5 0.5H12.5V20L6.5 26L0.5 20Z" fill="#d4d0c8"/><path d="M0.5 20V0.5H12.5" stroke="#fff" fill="none"/><path d="M11.5 1.5V19.6L6.5 24.6" stroke="#808080" fill="none"/><path d="M3 20.5H11" stroke="#606060" fill="none"/><path d="M12.5 0.5V20L6.5 26" stroke="#404040" fill="none"/><path d="M0.5 20L6.5 26" stroke="#fff" fill="none"/></svg>
<div class="a" style="left:679px;top:780px;width:152px;height:1px;background:#404040"></div>
<div class="a" style="left:679px;top:781px;width:152px;height:2px;background:#fffbf0"></div>
<div class="a" style="left:830px;top:779px;width:1px;height:3px;background:#fffbf0"></div>
<svg class="a" style="left:787px;top:769px" width="14" height="27" viewBox="0 0 14 27"><path d="M0.5 0.5H12.5V20L6.5 26L0.5 20Z" fill="#d4d0c8"/><path d="M0.5 20V0.5H12.5" stroke="#fff" fill="none"/><path d="M11.5 1.5V19.6L6.5 24.6" stroke="#808080" fill="none"/><path d="M3 20.5H11" stroke="#606060" fill="none"/><path d="M12.5 0.5V20L6.5 26" stroke="#404040" fill="none"/><path d="M0.5 20L6.5 26" stroke="#fff" fill="none"/></svg>
<div class="a" style="left:679px;top:810px;width:152px;height:1px;background:#404040"></div>
<div class="a" style="left:679px;top:811px;width:152px;height:2px;background:#fffbf0"></div>
<div class="a" style="left:830px;top:809px;width:1px;height:3px;background:#fffbf0"></div>
<svg class="a" style="left:748px;top:799px" width="14" height="27" viewBox="0 0 14 27"><path d="M0.5 0.5H12.5V20L6.5 26L0.5 20Z" fill="#d4d0c8"/><path d="M0.5 20V0.5H12.5" stroke="#fff" fill="none"/><path d="M11.5 1.5V19.6L6.5 24.6" stroke="#808080" fill="none"/><path d="M3 20.5H11" stroke="#606060" fill="none"/><path d="M12.5 0.5V20L6.5 26" stroke="#404040" fill="none"/><path d="M0.5 20L6.5 26" stroke="#fff" fill="none"/></svg>
<div class="sk" style="left:840px;top:737px;width:59px;height:22px;line-height:20px;font-size:14px;padding-left:3px">3</div>
<div class="sp u" style="left:881px;top:738px;width:16px;height:9px"></div>
<div class="sp d" style="left:881px;top:747px;width:16px;height:10px"></div>
<div class="sk" style="left:840px;top:767px;width:59px;height:22px;line-height:20px;font-size:14px;padding-left:3px">90</div>
<div class="sp u" style="left:881px;top:768px;width:16px;height:9px"></div>
<div class="sp d" style="left:881px;top:777px;width:16px;height:10px"></div>
<div class="sk" style="left:840px;top:797px;width:59px;height:22px;line-height:20px;font-size:14px;padding-left:3px">50</div>
<div class="sp u" style="left:881px;top:798px;width:16px;height:9px"></div>
<div class="sp d" style="left:881px;top:807px;width:16px;height:10px"></div>
<div class="a" style="left:967px;top:684px;width:107px;height:1px;background:#404040"></div>
<div class="a" style="left:967px;top:685px;width:107px;height:2px;background:#fffbf0"></div>
<div class="a" style="left:1073px;top:683px;width:1px;height:3px;background:#fffbf0"></div>
<div class="a" style="left:971px;top:697px;width:1px;height:3px;background:#000"></div>
<div class="a" style="left:995px;top:697px;width:1px;height:3px;background:#000"></div>
<div class="a" style="left:1020px;top:697px;width:1px;height:3px;background:#000"></div>
<div class="a" style="left:1044px;top:697px;width:1px;height:3px;background:#000"></div>
<div class="a" style="left:1068px;top:697px;width:1px;height:3px;background:#000"></div>
<svg class="a" style="left:1016px;top:677px" width="10" height="19" viewBox="0 0 10 19"><path d="M0.5 0.5H8.5V14L4.5 18L0.5 14Z" fill="#d4d0c8"/><path d="M0.5 14V0.5H8.5" stroke="#fff" fill="none"/><path d="M7.5 1.5V13.6L4.5 16.6" stroke="#808080" fill="none"/><path d="M8.5 0.5V14L4.5 18" stroke="#404040" fill="none"/><path d="M0.5 14L4.5 18" stroke="#fff" fill="none"/></svg>
<div class="a" style="left:967px;top:726px;width:107px;height:1px;background:#404040"></div>
<div class="a" style="left:967px;top:727px;width:107px;height:2px;background:#fffbf0"></div>
<div class="a" style="left:1073px;top:725px;width:1px;height:3px;background:#fffbf0"></div>
<div class="a" style="left:971px;top:739px;width:1px;height:3px;background:#000"></div>
<div class="a" style="left:995px;top:739px;width:1px;height:3px;background:#000"></div>
<div class="a" style="left:1020px;top:739px;width:1px;height:3px;background:#000"></div>
<div class="a" style="left:1044px;top:739px;width:1px;height:3px;background:#000"></div>
<div class="a" style="left:1068px;top:739px;width:1px;height:3px;background:#000"></div>
<svg class="a" style="left:1016px;top:719px" width="10" height="19" viewBox="0 0 10 19"><path d="M0.5 0.5H8.5V14L4.5 18L0.5 14Z" fill="#d4d0c8"/><path d="M0.5 14V0.5H8.5" stroke="#fff" fill="none"/><path d="M7.5 1.5V13.6L4.5 16.6" stroke="#808080" fill="none"/><path d="M8.5 0.5V14L4.5 18" stroke="#404040" fill="none"/><path d="M0.5 14L4.5 18" stroke="#fff" fill="none"/></svg>
<div class="a" style="left:937px;top:693px;width:1px;height:48px;background:#404040"></div>
<div class="a" style="left:938px;top:693px;width:2px;height:48px;background:#fffbf0"></div>
<svg class="a" style="left:931px;top:693px" width="16" height="8" viewBox="0 0 16 8"><path d="M0.5 0.5H10L14.5 4L10 7.5H0.5Z" fill="#d4d0c8" stroke="#fff"/><path d="M0.5 7.5H10L14.5 4" stroke="#404040" fill="none"/></svg>
<div class="a" style="left:1097px;top:693px;width:1px;height:48px;background:#404040"></div>
<div class="a" style="left:1098px;top:693px;width:2px;height:48px;background:#fffbf0"></div>
<svg class="a" style="left:1091px;top:693px" width="16" height="8" viewBox="0 0 16 8"><path d="M0.5 0.5H10L14.5 4L10 7.5H0.5Z" fill="#d4d0c8" stroke="#fff"/><path d="M0.5 7.5H10L14.5 4" stroke="#404040" fill="none"/></svg>
<div class="a" style="left:1150px;top:674px;font-size:14px;line-height:16px;color:#f4f4f4;font-weight:bold;letter-spacing:0px">Transmit Profile:</div>
<div class="sk" style="left:1141px;top:698px;width:128px;height:23px;line-height:21px;font-size:14px">ESSB</div>
<div class="arr" style="left:1248px;top:699px;width:19px;height:20px"></div>
<div class="b" style="left:1119px;top:727px;width:49px;height:20px;border-bottom:0;background:linear-gradient(to bottom,#d0d0d0 0,#e8e8e8 1px,#d8d8d8 3px,#b8b4b4 6px,#7a7474 8px,#3a3432 10px,#1e1a18 11px,#2c2826 16px,#3a3634 19px)"></div>
<div class="b" style="left:1167px;top:727px;width:22px;height:20px;border-bottom:0;background:linear-gradient(to bottom,#d0d0d0 0,#e8e8e8 1px,#d8d8d8 3px,#b8b4b4 6px,#7a7474 8px,#3a3432 10px,#1e1a18 11px,#2c2826 16px,#3a3634 19px)"></div>
<div class="a" style="left:1120px;top:730px;width:12px;height:13px;box-sizing:border-box;border:1px solid;border-color:#404040 #d4d0c8 #d4d0c8 #404040;background:#fff;box-shadow:1px 1px 0 #fff"></div>
<div class="a" style="left:1137px;top:729px;font-size:14px;line-height:16px;color:#fff;font-weight:bold;letter-spacing:.3px">Swap</div>
<div class="b" style="left:920px;top:767px"><span>GATE</span></div>
<div class="sk" style="left:980px;top:768px;width:59px;height:21px;line-height:19px;font-size:14px;padding-left:3px">-40</div>
<div class="sp u" style="left:1021px;top:769px;width:16px;height:9px"></div>
<div class="sp d" style="left:1021px;top:778px;width:16px;height:9px"></div>
<div class="b" style="left:1040px;top:767px"><span>VOX</span></div>
<div class="sk" style="left:1100px;top:768px;width:59px;height:21px;line-height:19px;font-size:14px;padding-left:3px">200</div>
<div class="sp u" style="left:1141px;top:769px;width:16px;height:9px"></div>
<div class="sp d" style="left:1141px;top:778px;width:16px;height:9px"></div>
<div class="b" style="left:920px;top:797px"><span>DX</span></div>
<div class="sk" style="left:980px;top:798px;width:59px;height:21px;line-height:19px;font-size:14px;padding-left:3px">3</div>
<div class="sp u" style="left:1021px;top:799px;width:16px;height:9px"></div>
<div class="sp d" style="left:1021px;top:808px;width:16px;height:9px"></div>
<div class="b" style="left:1040px;top:797px"><span>CPDR</span></div>
<div class="sk" style="left:1100px;top:798px;width:59px;height:21px;line-height:19px;font-size:14px;padding-left:3px">3</div>
<div class="sp u" style="left:1141px;top:799px;width:16px;height:9px"></div>
<div class="sp d" style="left:1141px;top:808px;width:16px;height:9px"></div>
<div class="b" style="left:1160px;top:797px"><span>VAC</span></div>
<div class="a" style="left:0;top:843px;width:1674px;height:1px;background:#767676"></div>
<div class="a" style="left:0;top:844px;width:1674px;height:1px;background:#fafafa"></div>
<div class="a" style="left:0;top:845px;width:1674px;height:1px;background:#767676"></div>
<div class="a" style="left:70px;top:851px;font-size:14.5px;line-height:17px;color:#f4f4f4;font-weight:normal;letter-spacing:.15px">-10156,8Hz&nbsp;&nbsp;-92,7dBm&nbsp;&nbsp;1,846 693 MHz</div>
<div class="a" style="left:1479px;top:851px;font-size:14.5px;line-height:17px;color:#f4f4f4;font-weight:normal;">RAM: 2814Mb CPU %: 10,2</div>
</body></html>
